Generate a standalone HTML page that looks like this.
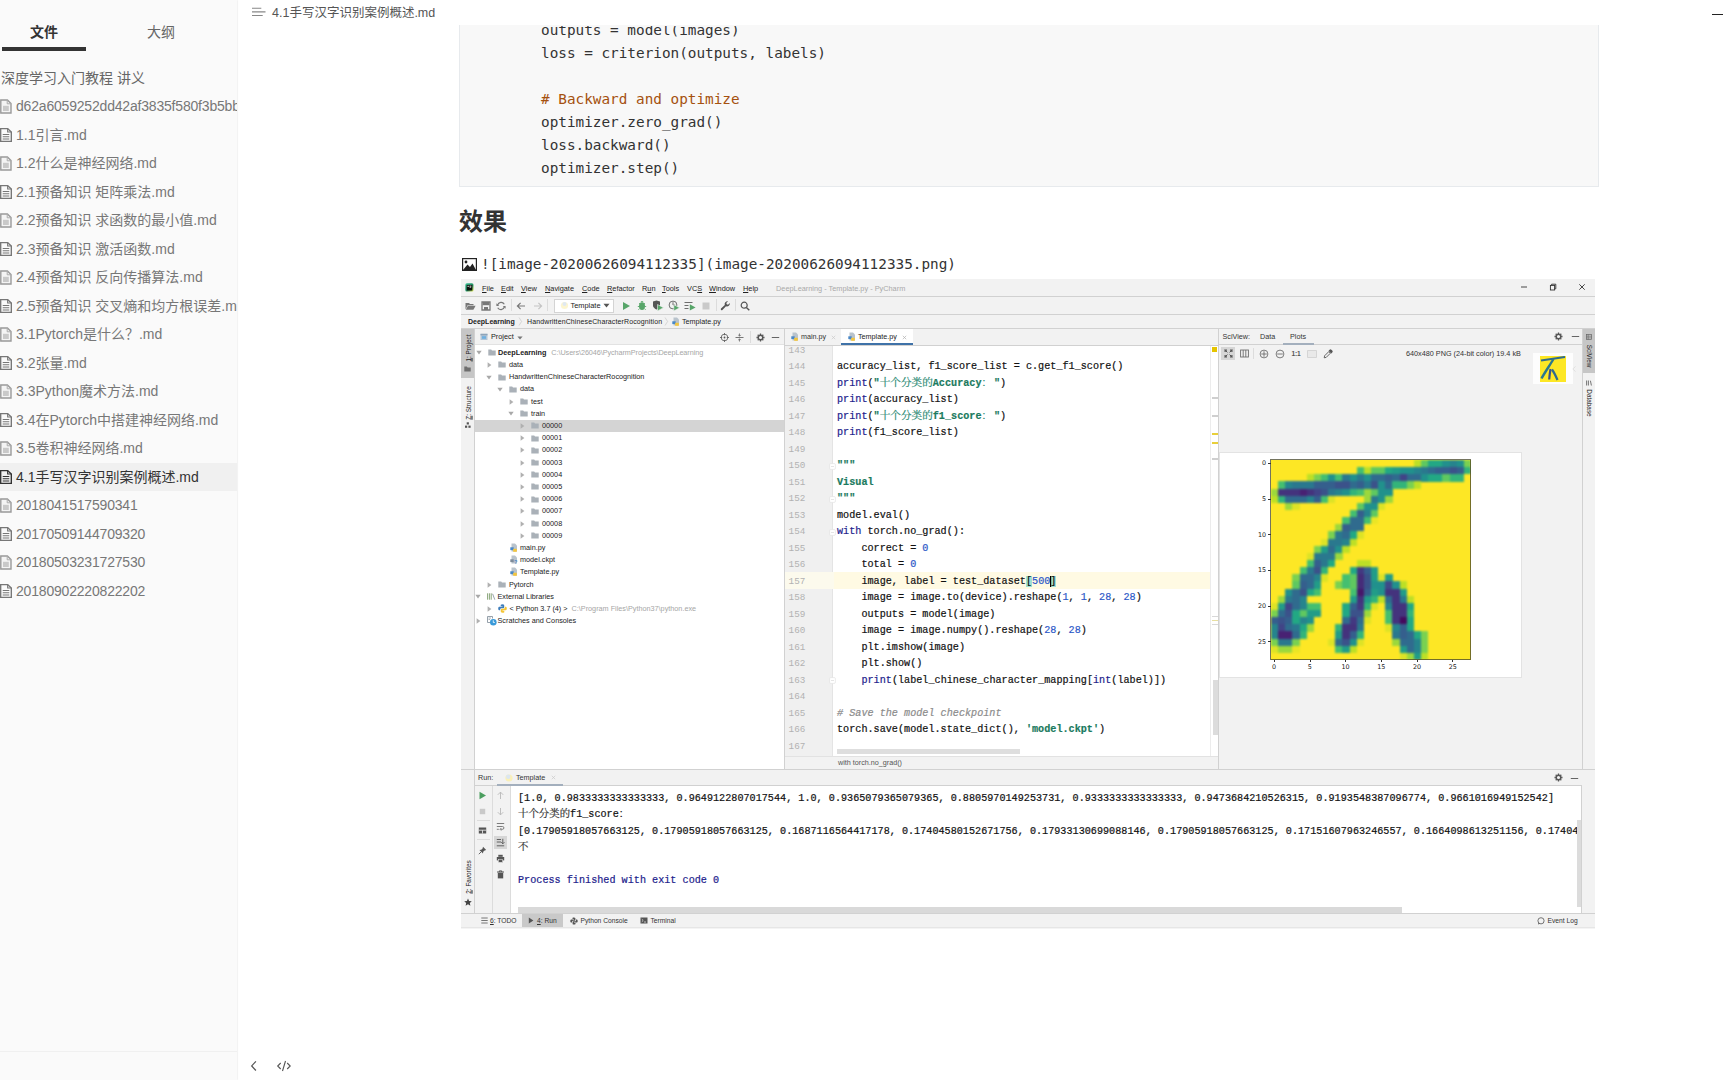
<!DOCTYPE html><html lang="zh"><head><meta charset="utf-8"><title>4.1手写汉字识别案例概述.md</title><style>
*{box-sizing:border-box;margin:0;padding:0}
html,body{width:1728px;height:1080px;overflow:hidden;background:#fff}
body{position:relative;font-family:"Liberation Sans","Noto Sans CJK SC",sans-serif;color:#333}
.a{position:absolute;white-space:nowrap}
.mono{font-family:"Liberation Mono","Noto Sans CJK SC",monospace}
#side{left:0;top:0;width:237px;height:1080px;background:#fafafa;box-shadow:0.5px 0 1.5px rgba(0,0,0,0.13);overflow:hidden}
.fi{left:0;width:237px;height:28px;font-size:14px;line-height:28px;color:#777;overflow:hidden}
.fi span{position:absolute;left:16px;top:0}
.fi svg{position:absolute;left:0px;top:7px}
.fi.act{background:#f0f0f0;color:#333}
.code{font-family:'DejaVu Sans Mono','Liberation Mono',monospace;font-size:14.35px;line-height:23px;color:#333;white-space:pre}
/* pycharm */
.ui{font-size:7.35px;line-height:10px;color:#222}
.pc{font-size:10.14px;line-height:16.5px;color:#111;white-space:pre;letter-spacing:0.018px;-webkit-text-stroke:0.2px}
.ln{font-size:9.3px;line-height:16.5px;color:#b2b2b2;white-space:pre}
.tr{font-size:7.25px;line-height:12px;color:#222}
.kw{color:#1c1c8c}.st{color:#1a7a5e;font-weight:bold}.nu{color:#2a57c8}.cm{color:#8c8c8c;font-style:italic}.bi{color:#1c1c8c}
</style></head><body>
<div id="side" class="a">
<div class="a" style="left:30px;top:21px;font-size:14px;line-height:22px;font-weight:bold;color:#333">文件</div>
<div class="a" style="left:147px;top:21px;font-size:14px;line-height:22px;color:#666">大纲</div>
<div class="a" style="left:2px;top:47.3px;width:84px;height:3.3px;background:#333"></div>
<div class="a" style="left:1px;top:67px;font-size:14px;line-height:22px;color:#666">深度学习入门教程 讲义</div>
<div class="a fi" style="top:92.0px"><svg width="12" height="15" viewBox="0 0 12 15" style="top:6.5px"><path d="M0.8 1H7.4L11 4.6V14H0.8Z" fill="#f4f4f4" stroke="#999" stroke-width="1.4"/><path d="M7.2 1V4.8H11" fill="none" stroke="#aaa" stroke-width="1"/><rect x="3" y="6.8" width="5.8" height="5.2" fill="#c9c9c9"/></svg><span style="letter-spacing:-0.19px">d62a6059252dd42af3835f580f3b5bb8</span></div>
<div class="a fi" style="top:120.5px"><svg width="12" height="14" viewBox="0 0 11 14" preserveAspectRatio="none"><path d="M0.6 0.6H7L10.4 4V13.4H0.6Z" fill="none" stroke="#777" stroke-width="1.3"/><path d="M7 0.6V4H10.4" fill="none" stroke="#777" stroke-width="1"/><path d="M2.5 6.5H8.5M2.5 8.7H8.5M2.5 10.9H8.5" stroke="#777" stroke-width="1"/></svg><span>1.1引言.md</span></div>
<div class="a fi" style="top:149.0px"><svg width="12" height="15" viewBox="0 0 12 15" style="top:6.5px"><path d="M0.8 1H7.4L11 4.6V14H0.8Z" fill="#f4f4f4" stroke="#999" stroke-width="1.4"/><path d="M7.2 1V4.8H11" fill="none" stroke="#aaa" stroke-width="1"/><rect x="3" y="6.8" width="5.8" height="5.2" fill="#c9c9c9"/></svg><span>1.2什么是神经网络.md</span></div>
<div class="a fi" style="top:177.5px"><svg width="12" height="14" viewBox="0 0 11 14" preserveAspectRatio="none"><path d="M0.6 0.6H7L10.4 4V13.4H0.6Z" fill="none" stroke="#777" stroke-width="1.3"/><path d="M7 0.6V4H10.4" fill="none" stroke="#777" stroke-width="1"/><path d="M2.5 6.5H8.5M2.5 8.7H8.5M2.5 10.9H8.5" stroke="#777" stroke-width="1"/></svg><span>2.1预备知识 矩阵乘法.md</span></div>
<div class="a fi" style="top:206.0px"><svg width="12" height="15" viewBox="0 0 12 15" style="top:6.5px"><path d="M0.8 1H7.4L11 4.6V14H0.8Z" fill="#f4f4f4" stroke="#999" stroke-width="1.4"/><path d="M7.2 1V4.8H11" fill="none" stroke="#aaa" stroke-width="1"/><rect x="3" y="6.8" width="5.8" height="5.2" fill="#c9c9c9"/></svg><span>2.2预备知识 求函数的最小值.md</span></div>
<div class="a fi" style="top:234.5px"><svg width="12" height="14" viewBox="0 0 11 14" preserveAspectRatio="none"><path d="M0.6 0.6H7L10.4 4V13.4H0.6Z" fill="none" stroke="#777" stroke-width="1.3"/><path d="M7 0.6V4H10.4" fill="none" stroke="#777" stroke-width="1"/><path d="M2.5 6.5H8.5M2.5 8.7H8.5M2.5 10.9H8.5" stroke="#777" stroke-width="1"/></svg><span>2.3预备知识 激活函数.md</span></div>
<div class="a fi" style="top:263.0px"><svg width="12" height="15" viewBox="0 0 12 15" style="top:6.5px"><path d="M0.8 1H7.4L11 4.6V14H0.8Z" fill="#f4f4f4" stroke="#999" stroke-width="1.4"/><path d="M7.2 1V4.8H11" fill="none" stroke="#aaa" stroke-width="1"/><rect x="3" y="6.8" width="5.8" height="5.2" fill="#c9c9c9"/></svg><span>2.4预备知识 反向传播算法.md</span></div>
<div class="a fi" style="top:291.5px"><svg width="12" height="14" viewBox="0 0 11 14" preserveAspectRatio="none"><path d="M0.6 0.6H7L10.4 4V13.4H0.6Z" fill="none" stroke="#777" stroke-width="1.3"/><path d="M7 0.6V4H10.4" fill="none" stroke="#777" stroke-width="1"/><path d="M2.5 6.5H8.5M2.5 8.7H8.5M2.5 10.9H8.5" stroke="#777" stroke-width="1"/></svg><span>2.5预备知识 交叉熵和均方根误差.md</span></div>
<div class="a fi" style="top:320.0px"><svg width="12" height="15" viewBox="0 0 12 15" style="top:6.5px"><path d="M0.8 1H7.4L11 4.6V14H0.8Z" fill="#f4f4f4" stroke="#999" stroke-width="1.4"/><path d="M7.2 1V4.8H11" fill="none" stroke="#aaa" stroke-width="1"/><rect x="3" y="6.8" width="5.8" height="5.2" fill="#c9c9c9"/></svg><span>3.1Pytorch是什么？.md</span></div>
<div class="a fi" style="top:348.5px"><svg width="12" height="14" viewBox="0 0 11 14" preserveAspectRatio="none"><path d="M0.6 0.6H7L10.4 4V13.4H0.6Z" fill="none" stroke="#777" stroke-width="1.3"/><path d="M7 0.6V4H10.4" fill="none" stroke="#777" stroke-width="1"/><path d="M2.5 6.5H8.5M2.5 8.7H8.5M2.5 10.9H8.5" stroke="#777" stroke-width="1"/></svg><span>3.2张量.md</span></div>
<div class="a fi" style="top:377.0px"><svg width="12" height="15" viewBox="0 0 12 15" style="top:6.5px"><path d="M0.8 1H7.4L11 4.6V14H0.8Z" fill="#f4f4f4" stroke="#999" stroke-width="1.4"/><path d="M7.2 1V4.8H11" fill="none" stroke="#aaa" stroke-width="1"/><rect x="3" y="6.8" width="5.8" height="5.2" fill="#c9c9c9"/></svg><span>3.3Python魔术方法.md</span></div>
<div class="a fi" style="top:405.5px"><svg width="12" height="14" viewBox="0 0 11 14" preserveAspectRatio="none"><path d="M0.6 0.6H7L10.4 4V13.4H0.6Z" fill="none" stroke="#777" stroke-width="1.3"/><path d="M7 0.6V4H10.4" fill="none" stroke="#777" stroke-width="1"/><path d="M2.5 6.5H8.5M2.5 8.7H8.5M2.5 10.9H8.5" stroke="#777" stroke-width="1"/></svg><span>3.4在Pytorch中搭建神经网络.md</span></div>
<div class="a fi" style="top:434.0px"><svg width="12" height="15" viewBox="0 0 12 15" style="top:6.5px"><path d="M0.8 1H7.4L11 4.6V14H0.8Z" fill="#f4f4f4" stroke="#999" stroke-width="1.4"/><path d="M7.2 1V4.8H11" fill="none" stroke="#aaa" stroke-width="1"/><rect x="3" y="6.8" width="5.8" height="5.2" fill="#c9c9c9"/></svg><span>3.5卷积神经网络.md</span></div>
<div class="a fi act" style="top:462.5px"><svg width="12" height="14" viewBox="0 0 11 14" preserveAspectRatio="none"><path d="M0.6 0.6H7L10.4 4V13.4H0.6Z" fill="none" stroke="#333" stroke-width="1.3"/><path d="M7 0.6V4H10.4" fill="none" stroke="#333" stroke-width="1"/><path d="M2.5 6.5H8.5M2.5 8.7H8.5M2.5 10.9H8.5" stroke="#333" stroke-width="1"/></svg><span>4.1手写汉字识别案例概述.md</span></div>
<div class="a fi" style="top:491.0px"><svg width="12" height="15" viewBox="0 0 12 15" style="top:6.5px"><path d="M0.8 1H7.4L11 4.6V14H0.8Z" fill="#f4f4f4" stroke="#999" stroke-width="1.4"/><path d="M7.2 1V4.8H11" fill="none" stroke="#aaa" stroke-width="1"/><rect x="3" y="6.8" width="5.8" height="5.2" fill="#c9c9c9"/></svg><span style="letter-spacing:-0.19px">2018041517590341</span></div>
<div class="a fi" style="top:519.5px"><svg width="12" height="14" viewBox="0 0 11 14" preserveAspectRatio="none"><path d="M0.6 0.6H7L10.4 4V13.4H0.6Z" fill="none" stroke="#777" stroke-width="1.3"/><path d="M7 0.6V4H10.4" fill="none" stroke="#777" stroke-width="1"/><path d="M2.5 6.5H8.5M2.5 8.7H8.5M2.5 10.9H8.5" stroke="#777" stroke-width="1"/></svg><span style="letter-spacing:-0.19px">20170509144709320</span></div>
<div class="a fi" style="top:548.0px"><svg width="12" height="15" viewBox="0 0 12 15" style="top:6.5px"><path d="M0.8 1H7.4L11 4.6V14H0.8Z" fill="#f4f4f4" stroke="#999" stroke-width="1.4"/><path d="M7.2 1V4.8H11" fill="none" stroke="#aaa" stroke-width="1"/><rect x="3" y="6.8" width="5.8" height="5.2" fill="#c9c9c9"/></svg><span style="letter-spacing:-0.19px">20180503231727530</span></div>
<div class="a fi" style="top:576.5px"><svg width="12" height="14" viewBox="0 0 11 14" preserveAspectRatio="none"><path d="M0.6 0.6H7L10.4 4V13.4H0.6Z" fill="none" stroke="#777" stroke-width="1.3"/><path d="M7 0.6V4H10.4" fill="none" stroke="#777" stroke-width="1"/><path d="M2.5 6.5H8.5M2.5 8.7H8.5M2.5 10.9H8.5" stroke="#777" stroke-width="1"/></svg><span style="letter-spacing:-0.19px">20180902220822202</span></div>
<div class="a" style="left:0;top:1051px;width:238px;height:1px;background:#f0f0f0"></div>
</div>
<svg class="a" style="left:251.5px;top:7px" width="15" height="11" viewBox="0 0 15 11"><path d="M0 1.3H9.3M0 4.9H13.5M0 8.5H10.7" stroke="#888" stroke-width="1.1"/></svg>
<div class="a" style="left:272px;top:4px;font-size:12.5px;line-height:18px;color:#555">4.1手写汉字识别案例概述.md</div>
<div class="a" style="left:1712px;top:14px;width:11px;height:1px;background:#222"></div>
<div class="a" style="left:459px;top:25px;width:1140px;height:162px;background:#f8f8f8;border:1px solid #e7eaed;border-top:none;overflow:hidden"></div>
<div class="a" style="left:459px;top:26px;width:1140px;height:161px;overflow:hidden">
<div class="a mono code" style="left:82px;top:-7.5px">outputs = model(images)</div>
<div class="a mono code" style="left:82px;top:15.5px">loss = criterion(outputs, labels)</div>
<div class="a mono code" style="left:82px;top:61.5px"><span style="color:#a5510f"># Backward and optimize</span></div>
<div class="a mono code" style="left:82px;top:84.5px">optimizer.zero_grad()</div>
<div class="a mono code" style="left:82px;top:107.5px">loss.backward()</div>
<div class="a mono code" style="left:82px;top:130.5px">optimizer.step()</div>
</div>
<div class="a" style="left:459px;top:204px;font-size:24px;line-height:36px;font-weight:bold;color:#333">效果</div>
<svg class="a" style="left:462px;top:258px" width="15" height="13" viewBox="0 0 15 13"><rect x="0.6" y="0.6" width="13.8" height="11.8" fill="#fff" stroke="#222" stroke-width="1.2"/><circle cx="4" cy="4" r="1.4" fill="#222"/><path d="M1 12L5.5 6.5L8 9L10.5 5.5L14 12Z" fill="#222"/></svg>
<div class="a mono code" style="left:481px;top:252.5px;line-height:22px">![image-20200626094112335](image-20200626094112335.png)</div>
<svg class="a" style="left:249px;top:1059px" width="10" height="14" viewBox="0 0 10 14"><path d="M6.9 2.3L2.7 6.9L6.9 11.5" fill="none" stroke="#555" stroke-width="1.25"/></svg>
<svg class="a" style="left:276px;top:1059px" width="17" height="14" viewBox="0 0 17 14"><path d="M4.7 4L1.7 7L4.7 10M11.2 4L14.2 7L11.2 10M9.5 2L6.5 12" fill="none" stroke="#555" stroke-width="1.1"/></svg>
<div class="a" style="left:461px;top:279px;width:1134px;height:648px;background:#f2f2f2;"></div>
<div class="a" style="left:461px;top:296px;width:1134px;height:1px;background:#d1d1d1;"></div>
<svg class="a" style="left:465px;top:283px" width="9" height="9" viewBox="0 0 9 9"><defs><linearGradient id="pcg" x1="0" y1="0" x2="1" y2="1"><stop offset="0" stop-color="#3fc59a"/><stop offset="0.55" stop-color="#1e8f62"/><stop offset="1" stop-color="#e8e84a"/></linearGradient></defs><rect x="0.3" y="0.3" width="8.2" height="8.2" rx="1.6" fill="url(#pcg)"/><rect x="1.7" y="1.9" width="5.6" height="5.6" fill="#0a0f0a"/><path d="M2.4 3.3H4M4.6 3.1L6.4 3.1M4.6 4.2H6.2" stroke="#fff" stroke-width="0.8"/></svg>
<div class="a ui" style="left:482px;top:283.5px;"><u>F</u>ile</div>
<div class="a ui" style="left:501px;top:283.5px;"><u>E</u>dit</div>
<div class="a ui" style="left:521px;top:283.5px;"><u>V</u>iew</div>
<div class="a ui" style="left:545px;top:283.5px;"><u>N</u>avigate</div>
<div class="a ui" style="left:582px;top:283.5px;"><u>C</u>ode</div>
<div class="a ui" style="left:607px;top:283.5px;"><u>R</u>efactor</div>
<div class="a ui" style="left:642px;top:283.5px;">R<u>u</u>n</div>
<div class="a ui" style="left:662px;top:283.5px;"><u>T</u>ools</div>
<div class="a ui" style="left:687px;top:283.5px;">VC<u>S</u></div>
<div class="a ui" style="left:709px;top:283.5px;"><u>W</u>indow</div>
<div class="a ui" style="left:743px;top:283.5px;"><u>H</u>elp</div>
<div class="a ui" style="left:776px;top:283.5px;color:#a9a9a9">DeepLearning - Template.py - PyCharm</div>
<svg class="a" style="left:1520.2px;top:283.4px" width="8" height="8" viewBox="0 0 8 8"><path d="M1 4H7" stroke="#333" stroke-width="0.9"/></svg>
<svg class="a" style="left:1548.8px;top:283.4px" width="8" height="8" viewBox="0 0 8 8"><rect x="1.4" y="2.4" width="4.2" height="4.6" fill="none" stroke="#333" stroke-width="0.9"/><path d="M2.6 2.4V1.2H6.8V5.8H5.6" fill="none" stroke="#333" stroke-width="0.9"/></svg>
<svg class="a" style="left:1577.7px;top:283.4px" width="8" height="8" viewBox="0 0 8 8"><path d="M1.3 1.3L6.7 6.7M6.7 1.3L1.3 6.7" stroke="#333" stroke-width="0.9"/></svg>
<div class="a" style="left:461px;top:314px;width:1134px;height:1px;background:#d1d1d1;"></div>
<svg class="a" style="left:465px;top:300.5px" width="11" height="10" viewBox="0 0 11 10"><path d="M0.5 2H4L5 3H8.5V4.2H2.6L0.5 8.5Z" fill="#787878"/><path d="M2.9 4.7H10.6L8.4 8.8H0.8Z" fill="#787878"/></svg>
<svg class="a" style="left:481px;top:300.5px" width="10" height="10" viewBox="0 0 10 10"><path d="M1 1H9V9H1Z" fill="none" stroke="#787878" stroke-width="1.3"/><rect x="1.5" y="1" width="7" height="3.2" fill="#787878"/><rect x="3" y="6" width="4" height="3" fill="#787878"/></svg>
<svg class="a" style="left:496px;top:300.5px" width="10" height="10" viewBox="0 0 10 10"><path d="M8.3 3.2A3.7 3.7 0 0 0 1.6 4" fill="none" stroke="#787878" stroke-width="1.2"/><path d="M1.7 6.8A3.7 3.7 0 0 0 8.4 6" fill="none" stroke="#787878" stroke-width="1.2"/><path d="M0.4 2.2V5H3.2ZM9.6 7.8V5H6.8Z" fill="#787878"/></svg>
<div class="a" style="left:511px;top:299px;width:1px;height:12px;background:#dcdcdc;"></div>
<svg class="a" style="left:516px;top:300.5px" width="10" height="10" viewBox="0 0 10 10"><path d="M9 5H1.5M4.6 1.8L1.4 5L4.6 8.2" fill="none" stroke="#787878" stroke-width="1.2"/></svg>
<svg class="a" style="left:533px;top:300.5px" width="10" height="10" viewBox="0 0 10 10"><path d="M1 5H8.5M5.4 1.8L8.6 5L5.4 8.2" fill="none" stroke="#c4c4c4" stroke-width="1.2"/></svg>
<div class="a" style="left:547px;top:299px;width:1px;height:12px;background:#dcdcdc;"></div>
<div class="a" style="left:554px;top:298.5px;width:60px;height:14px;background:#fff;border:1px solid #d4d4d4"></div>
<svg class="a" style="left:560px;top:301px" width="9" height="9" viewBox="0 0 9 9"><circle cx="4.5" cy="4.5" r="3.6" fill="#fbf3c4" opacity=".8"/><circle cx="4.5" cy="3" r="2" fill="#dfe8f2"/></svg>
<div class="a ui" style="left:570.5px;top:300.5px;font-size:7.4px">Template</div>
<svg class="a" style="left:603px;top:303px" width="7" height="5" viewBox="0 0 7 5"><path d="M0.5 0.8H6.5L3.5 4.4Z" fill="#555"/></svg>
<svg class="a" style="left:621px;top:300.5px" width="10" height="10" viewBox="0 0 10 10"><path d="M2 1L9 5L2 9Z" fill="#57a569"/></svg>
<svg class="a" style="left:637px;top:300px" width="10" height="11" viewBox="0 0 10 11"><ellipse cx="5" cy="6.3" rx="3" ry="3.7" fill="#57a569"/><path d="M2 3.2L3.6 4.6M8 3.2L6.4 4.6M0.8 6.5H2M8 6.5H9.2M1.4 9.8L2.6 8.6M8.6 9.8L7.4 8.6" stroke="#57a569" stroke-width="0.9"/><path d="M3.5 2.6A1.5 1.5 0 0 1 6.5 2.6Z" fill="#57a569"/></svg>
<svg class="a" style="left:652px;top:300px" width="12" height="11" viewBox="0 0 12 11"><path d="M1 1.5L4.5 0.5L8 1.5V5.5C8 8 4.5 9.5 4.5 9.5C4.5 9.5 1 8 1 5.5Z" fill="#555"/><path d="M5.5 4.5L11.5 7.7L5.5 10.9Z" fill="#57a569" stroke="#f2f2f2" stroke-width="0.6"/></svg>
<svg class="a" style="left:668px;top:300px" width="12" height="11" viewBox="0 0 12 11"><circle cx="5" cy="5" r="3.9" fill="none" stroke="#6e6e6e" stroke-width="1"/><path d="M5 2.2V5H7.2" fill="none" stroke="#6e6e6e" stroke-width="1"/><path d="M5.8 4.7L11.6 7.8L5.8 10.9Z" fill="#57a569" stroke="#f2f2f2" stroke-width="0.6"/></svg>
<svg class="a" style="left:684px;top:300.5px" width="12" height="10" viewBox="0 0 12 10"><path d="M0.5 1.5H8.5M0.5 4.5H4.5M0.5 7.5H4.5" stroke="#6e6e6e" stroke-width="1.2"/><path d="M5.8 3.2L11.6 6.4L5.8 9.6Z" fill="#57a569"/></svg>
<svg class="a" style="left:701px;top:300.5px" width="10" height="10" viewBox="0 0 10 10"><rect x="1.5" y="1.5" width="7" height="7" fill="#c9c9c9"/></svg>
<div class="a" style="left:716px;top:299px;width:1px;height:12px;background:#dcdcdc;"></div>
<svg class="a" style="left:720px;top:300px" width="11" height="11" viewBox="0 0 11 11"><path d="M9.8 2.9A2.9 2.9 0 0 1 6 6.2L2.4 10A1 1 0 0 1 1 8.6L4.8 5A2.9 2.9 0 0 1 8.1 1.2L6.3 3L6.8 4.2L8 4.7Z" fill="#555"/></svg>
<div class="a" style="left:735px;top:299px;width:1px;height:12px;background:#dcdcdc;"></div>
<svg class="a" style="left:740px;top:300.5px" width="10" height="10" viewBox="0 0 10 10"><circle cx="4.2" cy="4.2" r="3" fill="none" stroke="#555" stroke-width="1.2"/><path d="M6.4 6.4L9.3 9.3" stroke="#555" stroke-width="1.4"/></svg>
<div class="a ui" style="left:468px;top:316.5px;font-weight:bold;font-size:7px;letter-spacing:0">DeepLearning</div>
<svg class="a" style="left:518px;top:317px" width="5" height="9" viewBox="0 0 5 9"><path d="M1 0.5L3.6 4.5L1 8.5" fill="none" stroke="#c8c8c8" stroke-width="0.7"/></svg>
<div class="a ui" style="left:527px;top:316.5px;font-size:7px;letter-spacing:0.12px">HandwrittenChineseCharacterRocognition</div>
<svg class="a" style="left:664px;top:317px" width="5" height="9" viewBox="0 0 5 9"><path d="M1 0.5L3.6 4.5L1 8.5" fill="none" stroke="#c8c8c8" stroke-width="0.7"/></svg>
<svg class="a" style="left:672px;top:316.5px" width="8" height="10" viewBox="0 0 8 10"><path d="M1.5 0.5H5L7 2.5V8.5H1.5Z" fill="#b9c3cc"/><rect x="0.3" y="4.3" width="3.4" height="2.8" fill="#4a88c7"/><rect x="3.2" y="5.8" width="3.6" height="3" fill="#f4c63d"/></svg>
<div class="a ui" style="left:682px;top:316.5px;font-size:7.2px">Template.py</div>
<div class="a" style="left:461px;top:328px;width:1134px;height:1px;background:#d1d1d1;"></div>
<div class="a" style="left:474px;top:329px;width:1px;height:585px;background:#d1d1d1;"></div>
<div class="a" style="left:461px;top:329px;width:13px;height:49px;background:#c6c6c6;"></div>
<div class="a ui" style="left:467.5px;top:348px;width:0;height:0;"><div style="position:absolute;white-space:nowrap;transform:translate(-50%,-50%) rotate(-90deg);font-size:6.4px;line-height:9px"><u>1</u>: Project</div></div>
<svg class="a" style="left:464px;top:366px" width="7" height="6" viewBox="0 0 7 6"><path d="M0.3 0.5H2.8L3.6 1.4H6.7V5.6H0.3Z" fill="#6e6e6e"/></svg>
<div class="a ui" style="left:467.5px;top:403px;width:0;height:0;"><div style="position:absolute;white-space:nowrap;transform:translate(-50%,-50%) rotate(-90deg);font-size:6.4px;line-height:9px"><u>Z</u>: Structure</div></div>
<svg class="a" style="left:464.5px;top:422px" width="6" height="6" viewBox="0 0 6 6"><rect x="0" y="3.6" width="2.2" height="2.2" fill="#555"/><rect x="3.4" y="3.6" width="2.2" height="2.2" fill="#555"/><rect x="1.7" y="0.3" width="2.2" height="2.2" fill="#555"/></svg>
<div class="a ui" style="left:467.5px;top:877px;width:0;height:0;"><div style="position:absolute;white-space:nowrap;transform:translate(-50%,-50%) rotate(-90deg);font-size:6.4px;line-height:9px"><u>2</u>: Favorites</div></div>
<svg class="a" style="left:463.5px;top:898px" width="8" height="8" viewBox="0 0 8 8"><path d="M4 0.4L5.1 2.9L7.8 3.2L5.8 5L6.4 7.7L4 6.3L1.6 7.7L2.2 5L0.2 3.2L2.9 2.9Z" fill="#444"/></svg>
<div class="a" style="left:475px;top:329px;width:309px;height:16px;background:#f2f2f2;"></div>
<div class="a" style="left:475px;top:344px;width:309px;height:1px;background:#e2e2e2;"></div>
<div class="a" style="left:475px;top:345px;width:309px;height:424px;background:#fff;"></div>
<div class="a" style="left:784px;top:329px;width:1px;height:440px;background:#d1d1d1;"></div>
<svg class="a" style="left:480px;top:332.5px" width="8" height="8" viewBox="0 0 8 8"><rect x="0.5" y="0.8" width="7" height="6.2" fill="#b4c6d6"/><rect x="0.5" y="0.8" width="7" height="1.5" fill="#8fa4b8"/><rect x="2" y="3.2" width="4" height="2.6" fill="#6fb0e0"/></svg>
<div class="a ui" style="left:491px;top:332px;font-size:7.3px">Project</div>
<svg class="a" style="left:517px;top:335.5px" width="6" height="4" viewBox="0 0 6 4"><path d="M0.4 0.5H5.6L3 3.6Z" fill="#777"/></svg>
<svg class="a" style="left:720px;top:333px" width="9" height="9" viewBox="0 0 9 9"><circle cx="4.5" cy="4.5" r="3.3" fill="none" stroke="#555" stroke-width="0.8"/><circle cx="4.5" cy="4.5" r="0.9" fill="#555"/><path d="M4.5 0V2.2M4.5 6.8V9M0 4.5H2.2M6.8 4.5H9" stroke="#555" stroke-width="0.8"/></svg>
<svg class="a" style="left:735px;top:333px" width="9" height="9" viewBox="0 0 9 9"><path d="M0.5 4.5H8.5" stroke="#555" stroke-width="0.8"/><path d="M4.5 0.5V3M3.2 1.9L4.5 3.2L5.8 1.9M4.5 8.5V6M3.2 7.1L4.5 5.8L5.8 7.1" fill="none" stroke="#555" stroke-width="0.7"/></svg>
<div class="a" style="left:750px;top:331px;width:1px;height:12px;background:#dcdcdc;"></div>
<svg class="a" style="left:755.5px;top:332.5px" width="9" height="9" viewBox="0 0 9 9"><g transform="translate(4.5 4.5)"><circle r="2.3" fill="none" stroke="#555" stroke-width="1.5"/><g stroke="#555" stroke-width="1.3"><path d="M0 -4V-2.6M0 4V2.6M-4 0H-2.6M4 0H2.6M-2.83 -2.83L-1.9 -1.9M2.83 2.83L1.9 1.9M-2.83 2.83L-1.9 1.9M2.83 -2.83L1.9 -1.9"/></g></g></svg>
<svg class="a" style="left:771px;top:333px" width="9" height="9" viewBox="0 0 9 9"><path d="M0.8 4.5H8.2" stroke="#555" stroke-width="0.9"/></svg>
<svg class="a" style="left:476px;top:350.3px" width="6" height="5" viewBox="0 0 6 5"><path d="M0.3 0.8H5.7L3 4.4Z" fill="#a8a8a8"/></svg>
<svg class="a" style="left:487.5px;top:349.3px" width="8" height="7" viewBox="0 0 8 7"><path d="M0.3 0.6H3.2L4 1.6H7.7V6.4H0.3Z" fill="#aab1b8"/></svg>
<div class="a tr" style="left:498px;top:346.8px;"><b>DeepLearning</b> <span style="color:#a6a6a6;margin-left:3px;letter-spacing:-0.07px">C:\Users\26046\PycharmProjects\DeepLearning</span></div>
<svg class="a" style="left:487px;top:361.995px" width="5" height="6" viewBox="0 0 5 6"><path d="M0.6 0.3L4.4 3L0.6 5.7Z" fill="#b0b0b0"/></svg>
<svg class="a" style="left:498px;top:361.495px" width="8" height="7" viewBox="0 0 8 7"><path d="M0.3 0.6H3.2L4 1.6H7.7V6.4H0.3Z" fill="#aab1b8"/></svg>
<div class="a tr" style="left:509px;top:358.995px;">data</div>
<svg class="a" style="left:486px;top:374.69px" width="6" height="5" viewBox="0 0 6 5"><path d="M0.3 0.8H5.7L3 4.4Z" fill="#a8a8a8"/></svg>
<svg class="a" style="left:498px;top:373.69px" width="8" height="7" viewBox="0 0 8 7"><path d="M0.3 0.6H3.2L4 1.6H7.7V6.4H0.3Z" fill="#aab1b8"/></svg>
<div class="a tr" style="left:509px;top:371.19px;">HandwrittenChineseCharacterRocognition</div>
<svg class="a" style="left:497px;top:386.885px" width="6" height="5" viewBox="0 0 6 5"><path d="M0.3 0.8H5.7L3 4.4Z" fill="#a8a8a8"/></svg>
<svg class="a" style="left:509px;top:385.885px" width="8" height="7" viewBox="0 0 8 7"><path d="M0.3 0.6H3.2L4 1.6H7.7V6.4H0.3Z" fill="#aab1b8"/></svg>
<div class="a tr" style="left:520px;top:383.385px;">data</div>
<svg class="a" style="left:509px;top:398.58px" width="5" height="6" viewBox="0 0 5 6"><path d="M0.6 0.3L4.4 3L0.6 5.7Z" fill="#b0b0b0"/></svg>
<svg class="a" style="left:520px;top:398.08px" width="8" height="7" viewBox="0 0 8 7"><path d="M0.3 0.6H3.2L4 1.6H7.7V6.4H0.3Z" fill="#aab1b8"/></svg>
<div class="a tr" style="left:531px;top:395.58px;">test</div>
<svg class="a" style="left:508px;top:411.275px" width="6" height="5" viewBox="0 0 6 5"><path d="M0.3 0.8H5.7L3 4.4Z" fill="#a8a8a8"/></svg>
<svg class="a" style="left:520px;top:410.275px" width="8" height="7" viewBox="0 0 8 7"><path d="M0.3 0.6H3.2L4 1.6H7.7V6.4H0.3Z" fill="#aab1b8"/></svg>
<div class="a tr" style="left:531px;top:407.775px;">train</div>
<div class="a" style="left:475px;top:419.97px;width:309px;height:12.2px;background:#d4d4d4;"></div>
<svg class="a" style="left:520px;top:422.97px" width="5" height="6" viewBox="0 0 5 6"><path d="M0.6 0.3L4.4 3L0.6 5.7Z" fill="#b0b0b0"/></svg>
<svg class="a" style="left:531px;top:422.47px" width="8" height="7" viewBox="0 0 8 7"><path d="M0.3 0.6H3.2L4 1.6H7.7V6.4H0.3Z" fill="#aab1b8"/></svg>
<div class="a tr" style="left:542px;top:419.97px;">00000</div>
<svg class="a" style="left:520px;top:435.165px" width="5" height="6" viewBox="0 0 5 6"><path d="M0.6 0.3L4.4 3L0.6 5.7Z" fill="#b0b0b0"/></svg>
<svg class="a" style="left:531px;top:434.665px" width="8" height="7" viewBox="0 0 8 7"><path d="M0.3 0.6H3.2L4 1.6H7.7V6.4H0.3Z" fill="#aab1b8"/></svg>
<div class="a tr" style="left:542px;top:432.165px;">00001</div>
<svg class="a" style="left:520px;top:447.36px" width="5" height="6" viewBox="0 0 5 6"><path d="M0.6 0.3L4.4 3L0.6 5.7Z" fill="#b0b0b0"/></svg>
<svg class="a" style="left:531px;top:446.86px" width="8" height="7" viewBox="0 0 8 7"><path d="M0.3 0.6H3.2L4 1.6H7.7V6.4H0.3Z" fill="#aab1b8"/></svg>
<div class="a tr" style="left:542px;top:444.36px;">00002</div>
<svg class="a" style="left:520px;top:459.555px" width="5" height="6" viewBox="0 0 5 6"><path d="M0.6 0.3L4.4 3L0.6 5.7Z" fill="#b0b0b0"/></svg>
<svg class="a" style="left:531px;top:459.055px" width="8" height="7" viewBox="0 0 8 7"><path d="M0.3 0.6H3.2L4 1.6H7.7V6.4H0.3Z" fill="#aab1b8"/></svg>
<div class="a tr" style="left:542px;top:456.555px;">00003</div>
<svg class="a" style="left:520px;top:471.75px" width="5" height="6" viewBox="0 0 5 6"><path d="M0.6 0.3L4.4 3L0.6 5.7Z" fill="#b0b0b0"/></svg>
<svg class="a" style="left:531px;top:471.25px" width="8" height="7" viewBox="0 0 8 7"><path d="M0.3 0.6H3.2L4 1.6H7.7V6.4H0.3Z" fill="#aab1b8"/></svg>
<div class="a tr" style="left:542px;top:468.75px;">00004</div>
<svg class="a" style="left:520px;top:483.945px" width="5" height="6" viewBox="0 0 5 6"><path d="M0.6 0.3L4.4 3L0.6 5.7Z" fill="#b0b0b0"/></svg>
<svg class="a" style="left:531px;top:483.445px" width="8" height="7" viewBox="0 0 8 7"><path d="M0.3 0.6H3.2L4 1.6H7.7V6.4H0.3Z" fill="#aab1b8"/></svg>
<div class="a tr" style="left:542px;top:480.945px;">00005</div>
<svg class="a" style="left:520px;top:496.14px" width="5" height="6" viewBox="0 0 5 6"><path d="M0.6 0.3L4.4 3L0.6 5.7Z" fill="#b0b0b0"/></svg>
<svg class="a" style="left:531px;top:495.64px" width="8" height="7" viewBox="0 0 8 7"><path d="M0.3 0.6H3.2L4 1.6H7.7V6.4H0.3Z" fill="#aab1b8"/></svg>
<div class="a tr" style="left:542px;top:493.14px;">00006</div>
<svg class="a" style="left:520px;top:508.335px" width="5" height="6" viewBox="0 0 5 6"><path d="M0.6 0.3L4.4 3L0.6 5.7Z" fill="#b0b0b0"/></svg>
<svg class="a" style="left:531px;top:507.835px" width="8" height="7" viewBox="0 0 8 7"><path d="M0.3 0.6H3.2L4 1.6H7.7V6.4H0.3Z" fill="#aab1b8"/></svg>
<div class="a tr" style="left:542px;top:505.335px;">00007</div>
<svg class="a" style="left:520px;top:520.53px" width="5" height="6" viewBox="0 0 5 6"><path d="M0.6 0.3L4.4 3L0.6 5.7Z" fill="#b0b0b0"/></svg>
<svg class="a" style="left:531px;top:520.03px" width="8" height="7" viewBox="0 0 8 7"><path d="M0.3 0.6H3.2L4 1.6H7.7V6.4H0.3Z" fill="#aab1b8"/></svg>
<div class="a tr" style="left:542px;top:517.53px;">00008</div>
<svg class="a" style="left:520px;top:532.725px" width="5" height="6" viewBox="0 0 5 6"><path d="M0.6 0.3L4.4 3L0.6 5.7Z" fill="#b0b0b0"/></svg>
<svg class="a" style="left:531px;top:532.225px" width="8" height="7" viewBox="0 0 8 7"><path d="M0.3 0.6H3.2L4 1.6H7.7V6.4H0.3Z" fill="#aab1b8"/></svg>
<div class="a tr" style="left:542px;top:529.725px;">00009</div>
<svg class="a" style="left:510px;top:542.92px" width="8" height="10" viewBox="0 0 8 10"><path d="M1.5 0.5H5L7 2.5V8.5H1.5Z" fill="#b9c3cc"/><rect x="0.3" y="4.3" width="3.4" height="2.8" fill="#4a88c7"/><rect x="3.2" y="5.8" width="3.6" height="3" fill="#f4c63d"/></svg>
<div class="a tr" style="left:520px;top:541.92px;">main.py</div>
<svg class="a" style="left:510px;top:555.115px" width="8" height="10" viewBox="0 0 8 10"><path d="M1.5 0.5H5L7 2.5V8.5H1.5Z" fill="#b9c3cc"/><rect x="0.3" y="4.3" width="3.4" height="2.8" fill="#7d8b99"/><text x="4" y="9.3" font-size="5.5" font-family="Liberation Sans,sans-serif" fill="#4a88c7" font-weight="bold">?</text></svg>
<div class="a tr" style="left:520px;top:554.115px;">model.ckpt</div>
<svg class="a" style="left:510px;top:567.31px" width="8" height="10" viewBox="0 0 8 10"><path d="M1.5 0.5H5L7 2.5V8.5H1.5Z" fill="#b9c3cc"/><rect x="0.3" y="4.3" width="3.4" height="2.8" fill="#4a88c7"/><rect x="3.2" y="5.8" width="3.6" height="3" fill="#f4c63d"/></svg>
<div class="a tr" style="left:520px;top:566.31px;">Template.py</div>
<svg class="a" style="left:487px;top:581.505px" width="5" height="6" viewBox="0 0 5 6"><path d="M0.6 0.3L4.4 3L0.6 5.7Z" fill="#b0b0b0"/></svg>
<svg class="a" style="left:498px;top:581.005px" width="8" height="7" viewBox="0 0 8 7"><path d="M0.3 0.6H3.2L4 1.6H7.7V6.4H0.3Z" fill="#aab1b8"/></svg>
<div class="a tr" style="left:509px;top:578.505px;">Pytorch</div>
<svg class="a" style="left:475px;top:594.2px" width="6" height="5" viewBox="0 0 6 5"><path d="M0.3 0.8H5.7L3 4.4Z" fill="#a8a8a8"/></svg>
<svg class="a" style="left:487px;top:593.2px" width="9" height="7" viewBox="0 0 9 7"><path d="M0.6 0.3V6.7M2.4 0.3V6.7M4.2 0.3V6.7" stroke="#7a9a68" stroke-width="0.9"/><path d="M5.6 0.8L7.8 6.7" stroke="#9aa4ad" stroke-width="1"/></svg>
<div class="a tr" style="left:497.5px;top:590.7px;">External Libraries</div>
<svg class="a" style="left:487px;top:605.895px" width="5" height="6" viewBox="0 0 5 6"><path d="M0.6 0.3L4.4 3L0.6 5.7Z" fill="#b0b0b0"/></svg>
<svg class="a" style="left:498px;top:604.395px" width="9" height="9" viewBox="0 0 9 9"><path d="M4.4 0.3C2.6 0.3 2.7 1.1 2.7 1.1V2.3H4.5V2.7H1.4S0.2 2.6 0.2 4.5S1.3 6.3 1.3 6.3H2.2V5.2S2.2 4.2 3.3 4.2H5.2S6.2 4.2 6.2 3.2V1.4S6.4 0.3 4.4 0.3Z" fill="#3d7dbb"/><path d="M4.6 8.7C6.4 8.7 6.3 7.9 6.3 7.9V6.7H4.5V6.3H7.6S8.8 6.4 8.8 4.5S7.7 2.7 7.7 2.7H6.8V3.8S6.8 4.8 5.7 4.8H3.8S2.8 4.8 2.8 5.8V7.6S2.6 8.7 4.6 8.7Z" fill="#f5c535"/></svg>
<div class="a tr" style="left:509.5px;top:602.895px;">&lt; Python 3.7 (4) &gt; <span style="color:#a6a6a6;margin-left:2px">C:\Program Files\Python37\python.exe</span></div>
<svg class="a" style="left:476px;top:618.09px" width="5" height="6" viewBox="0 0 5 6"><path d="M0.6 0.3L4.4 3L0.6 5.7Z" fill="#b0b0b0"/></svg>
<svg class="a" style="left:487px;top:616.09px" width="10" height="10" viewBox="0 0 10 10"><path d="M0.5 0.5H5.5V2.5M0.5 0.5V6.5H3" fill="none" stroke="#8a96a1" stroke-width="0.9"/><path d="M1.5 2H4M1.5 3.5H3" stroke="#8a96a1" stroke-width="0.7"/><circle cx="6.3" cy="6.3" r="3.3" fill="#3a9ad9"/><path d="M6.3 4.3V6.5H7.8" fill="none" stroke="#fff" stroke-width="0.8"/></svg>
<div class="a tr" style="left:497.5px;top:615.09px;">Scratches and Consoles</div>
<div class="a" style="left:785px;top:329px;width:434px;height:16px;background:#f2f2f2;"></div>
<div class="a" style="left:785px;top:344.5px;width:434px;height:1px;background:#d1d1d1;"></div>
<svg class="a" style="left:791px;top:332px" width="8" height="10" viewBox="0 0 8 10"><path d="M1.5 0.5H5L7 2.5V8.5H1.5Z" fill="#b9c3cc"/><rect x="0.3" y="4.3" width="3.4" height="2.8" fill="#4a88c7"/><rect x="3.2" y="5.8" width="3.6" height="3" fill="#f4c63d"/></svg>
<div class="a ui" style="left:801px;top:332px;font-size:7.2px;color:#333">main.py</div>
<svg class="a" style="left:831px;top:334.5px" width="5" height="5" viewBox="0 0 5 5"><path d="M0.8 0.8L4.2 4.2M4.2 0.8L0.8 4.2" stroke="#c8c8c8" stroke-width="0.7"/></svg>
<div class="a" style="left:841px;top:329px;width:72px;height:16px;background:#fff;"></div>
<div class="a" style="left:841px;top:343.2px;width:72px;height:1.7px;background:#3f72a8;"></div>
<svg class="a" style="left:848px;top:332px" width="8" height="10" viewBox="0 0 8 10"><path d="M1.5 0.5H5L7 2.5V8.5H1.5Z" fill="#b9c3cc"/><rect x="0.3" y="4.3" width="3.4" height="2.8" fill="#4a88c7"/><rect x="3.2" y="5.8" width="3.6" height="3" fill="#f4c63d"/></svg>
<div class="a ui" style="left:858px;top:332px;font-size:7.2px;color:#222">Template.py</div>
<svg class="a" style="left:902px;top:334.5px" width="5" height="5" viewBox="0 0 5 5"><path d="M0.8 0.8L4.2 4.2M4.2 0.8L0.8 4.2" stroke="#b0b0b0" stroke-width="0.7"/></svg>
<div class="a" style="left:785px;top:346px;width:434px;height:410px;background:#fff;overflow:hidden">
<div class="a" style="left:0;top:0;width:47px;height:410px;background:#f0f0f0"></div>
<div class="a" style="left:47px;top:0;width:1px;height:410px;background:#e4e4e4"></div>
<div class="a" style="left:0;top:226px;width:425px;height:16.5px;background:#fcfaed"></div>
<div class="a" style="left:49px;top:226px;width:376px;height:16.5px;background:#fffae3"></div>
<div class="a mono ln" style="left:3.6px;top:-3.15px">143</div>
<div class="a mono ln" style="left:3.6px;top:13.34px">144</div>
<div class="a mono pc" style="left:52px;top:13.34px">accuracy_list, f1_score_list = c.get_f1_score()</div>
<div class="a mono ln" style="left:3.6px;top:29.83px">145</div>
<div class="a mono pc" style="left:52px;top:29.83px"><span class="kw">print</span>(<span class="st">"<span style="font-family:'Noto Serif CJK SC',serif;font-weight:normal;font-size:10.6px;color:#2a8a74;line-height:0">十个分类的</span>Accuracy<span style="font-family:'Noto Serif CJK SC',serif;font-weight:normal;font-size:10.4px;color:#2a8a74;line-height:0;padding-right:2px">：</span>"</span>)</div>
<div class="a mono ln" style="left:3.6px;top:46.32px">146</div>
<div class="a mono pc" style="left:52px;top:46.32px"><span class="kw">print</span>(accuracy_list)</div>
<div class="a mono ln" style="left:3.6px;top:62.81px">147</div>
<div class="a mono pc" style="left:52px;top:62.81px"><span class="kw">print</span>(<span class="st">"<span style="font-family:'Noto Serif CJK SC',serif;font-weight:normal;font-size:10.6px;color:#2a8a74;line-height:0">十个分类的</span>f1_score<span style="font-family:'Noto Serif CJK SC',serif;font-weight:normal;font-size:10.4px;color:#2a8a74;line-height:0;padding-right:2px">：</span>"</span>)</div>
<div class="a mono ln" style="left:3.6px;top:79.3px">148</div>
<div class="a mono pc" style="left:52px;top:79.3px"><span class="kw">print</span>(f1_score_list)</div>
<div class="a mono ln" style="left:3.6px;top:95.79px">149</div>
<div class="a mono ln" style="left:3.6px;top:112.28px">150</div>
<div class="a mono pc" style="left:52px;top:112.28px"><span class="st">"""</span></div>
<div class="a mono ln" style="left:3.6px;top:128.77px">151</div>
<div class="a mono pc" style="left:52px;top:128.77px"><span class="st">Visual</span></div>
<div class="a mono ln" style="left:3.6px;top:145.26px">152</div>
<div class="a mono pc" style="left:52px;top:145.26px"><span class="st">"""</span></div>
<div class="a mono ln" style="left:3.6px;top:161.75px">153</div>
<div class="a mono pc" style="left:52px;top:161.75px">model.eval()</div>
<div class="a mono ln" style="left:3.6px;top:178.24px">154</div>
<div class="a mono pc" style="left:52px;top:178.24px"><span class="kw">with</span> torch.no_grad():</div>
<div class="a mono ln" style="left:3.6px;top:194.73px">155</div>
<div class="a mono pc" style="left:52px;top:194.73px">    correct = <span class="nu">0</span></div>
<div class="a mono ln" style="left:3.6px;top:211.22px">156</div>
<div class="a mono pc" style="left:52px;top:211.22px">    total = <span class="nu">0</span></div>
<div class="a mono ln" style="left:3.6px;top:227.71px">157</div>
<div class="a mono pc" style="left:52px;top:227.71px">    image, label = test_dataset<span style="background:#9fe0d3">[</span><span class="nu">500</span><span style="background:#9fe0d3;box-shadow:inset 1.2px 0 0 #000">]</span></div>
<div class="a mono ln" style="left:3.6px;top:244.2px">158</div>
<div class="a mono pc" style="left:52px;top:244.2px">    image = image.to(device).reshape(<span class="nu">1</span>, <span class="nu">1</span>, <span class="nu">28</span>, <span class="nu">28</span>)</div>
<div class="a mono ln" style="left:3.6px;top:260.69px">159</div>
<div class="a mono pc" style="left:52px;top:260.69px">    outputs = model(image)</div>
<div class="a mono ln" style="left:3.6px;top:277.18px">160</div>
<div class="a mono pc" style="left:52px;top:277.18px">    image = image.numpy().reshape(<span class="nu">28</span>, <span class="nu">28</span>)</div>
<div class="a mono ln" style="left:3.6px;top:293.67px">161</div>
<div class="a mono pc" style="left:52px;top:293.67px">    plt.imshow(image)</div>
<div class="a mono ln" style="left:3.6px;top:310.16px">162</div>
<div class="a mono pc" style="left:52px;top:310.16px">    plt.show()</div>
<div class="a mono ln" style="left:3.6px;top:326.65px">163</div>
<div class="a mono pc" style="left:52px;top:326.65px">    <span class="kw">print</span>(label_chinese_character_mapping[<span class="kw">int</span>(label)])</div>
<div class="a mono ln" style="left:3.6px;top:343.14px">164</div>
<div class="a mono ln" style="left:3.6px;top:359.63px">165</div>
<div class="a mono pc" style="left:52px;top:359.63px"><span class="cm"># Save the model checkpoint</span></div>
<div class="a mono ln" style="left:3.6px;top:376.12px">166</div>
<div class="a mono pc" style="left:52px;top:376.12px">torch.save(model.state_dict(), <span class="st">'model.ckpt'</span>)</div>
<div class="a mono ln" style="left:3.6px;top:392.61px">167</div>
<svg class="a" style="left:43.5px;top:117.03px" width="7" height="7" viewBox="0 0 7 7"><rect x="0.6" y="0.6" width="5.8" height="5.8" rx="1.2" fill="#fff" stroke="#dedede" stroke-width="0.6"/><path d="M2 3.5H5" stroke="#d4d4d4" stroke-width="0.6"/></svg>
<svg class="a" style="left:43.5px;top:150.01px" width="7" height="7" viewBox="0 0 7 7"><rect x="0.6" y="0.6" width="5.8" height="5.8" rx="1.2" fill="#fff" stroke="#dedede" stroke-width="0.6"/><path d="M2 3.5H5" stroke="#d4d4d4" stroke-width="0.6"/></svg>
<svg class="a" style="left:43.5px;top:182.99px" width="7" height="7" viewBox="0 0 7 7"><rect x="0.6" y="0.6" width="5.8" height="5.8" rx="1.2" fill="#fff" stroke="#dedede" stroke-width="0.6"/><path d="M2 3.5H5" stroke="#d4d4d4" stroke-width="0.6"/></svg>
<svg class="a" style="left:43.5px;top:331.4px" width="7" height="7" viewBox="0 0 7 7"><rect x="0.6" y="0.6" width="5.8" height="5.8" rx="1.2" fill="#fff" stroke="#dedede" stroke-width="0.6"/><path d="M2 3.5H5" stroke="#d4d4d4" stroke-width="0.6"/></svg>
<div class="a" style="left:425px;top:0;width:9px;height:410px;background:#fff;border-left:1px solid #ececec"></div>
<div class="a" style="left:427px;top:1px;width:5px;height:5px;background:#e5c400"></div>
<div class="a" style="left:427px;top:51.4px;width:7px;height:1.2px;background:#cfcfcf"></div>
<div class="a" style="left:427px;top:69.4px;width:7px;height:1.2px;background:#cfcfcf"></div>
<div class="a" style="left:427px;top:87.4px;width:7px;height:1.2px;background:#e8cf3a"></div>
<div class="a" style="left:427px;top:96.4px;width:7px;height:1.2px;background:#e8cf3a"></div>
<div class="a" style="left:427px;top:112.4px;width:7px;height:1.2px;background:#cfcfcf"></div>
<div class="a" style="left:427px;top:270px;width:7px;height:1px;background:#d8d8d8"></div>
<div class="a" style="left:427px;top:274px;width:7px;height:1px;background:#e8dfa0"></div>
<div class="a" style="left:427px;top:278px;width:7px;height:1px;background:#d8d8d8"></div>
<div class="a" style="left:428px;top:334px;width:6px;height:55px;background:#dcdcdc"></div>
<div class="a" style="left:52px;top:402.5px;width:183px;height:5.5px;background:#dedede"></div>
</div>
<div class="a" style="left:785px;top:756px;width:434px;height:13px;background:#f2f2f2;"></div>
<div class="a" style="left:785px;top:756px;width:434px;height:1px;background:#e2e2e2;"></div>
<div class="a ui" style="left:838px;top:757.5px;font-size:7.2px;color:#555">with torch.no_grad()</div>
<div class="a" style="left:461px;top:769px;width:1134px;height:1px;background:#d1d1d1;"></div>
<div class="a" style="left:1218px;top:329px;width:1px;height:440px;background:#d1d1d1;"></div>
<div class="a" style="left:1219px;top:329px;width:363px;height:16px;background:#f2f2f2;"></div>
<div class="a" style="left:1219px;top:344px;width:363px;height:1px;background:#d1d1d1;"></div>
<div class="a ui" style="left:1222.5px;top:332px;font-size:7.2px;color:#333">SciView:</div>
<div class="a ui" style="left:1260px;top:332px;font-size:7.2px;color:#333">Data</div>
<div class="a ui" style="left:1290px;top:332px;font-size:7.2px;color:#333">Plots</div>
<div class="a" style="left:1283px;top:343px;width:31px;height:1.5px;background:#a3afbd;"></div>
<svg class="a" style="left:1554.3px;top:332px" width="9" height="9" viewBox="0 0 9 9"><g transform="translate(4.5 4.5)"><circle r="2.3" fill="none" stroke="#555" stroke-width="1.5"/><g stroke="#555" stroke-width="1.3"><path d="M0 -4V-2.6M0 4V2.6M-4 0H-2.6M4 0H2.6M-2.83 -2.83L-1.9 -1.9M2.83 2.83L1.9 1.9M-2.83 2.83L-1.9 1.9M2.83 -2.83L1.9 -1.9"/></g></g></svg>
<svg class="a" style="left:1570.5px;top:332px" width="9" height="9" viewBox="0 0 9 9"><path d="M0.8 4.5H8.2" stroke="#555" stroke-width="0.9"/></svg>
<div class="a" style="left:1221px;top:347px;width:14px;height:13px;background:#d6d6d6;"></div>
<svg class="a" style="left:1223.5px;top:349px" width="9" height="9" viewBox="0 0 9 9"><path d="M0.8 0.8L3.4 3.4M8.2 0.8L5.6 3.4M0.8 8.2L3.4 5.6M8.2 8.2L5.6 5.6" stroke="#555" stroke-width="1"/><path d="M0.5 0.5H3V1.3L1.3 3H0.5ZM8.5 0.5H6V1.3L7.7 3H8.5ZM0.5 8.5H3V7.7L1.3 6H0.5ZM8.5 8.5H6V7.7L7.7 6H8.5Z" fill="#555"/></svg>
<svg class="a" style="left:1239.5px;top:349px" width="9" height="9" viewBox="0 0 9 9"><rect x="0.6" y="1" width="7.8" height="7" fill="none" stroke="#6e6e6e" stroke-width="0.9"/><path d="M3.2 1V8M5.8 1V8" stroke="#6e6e6e" stroke-width="0.9"/></svg>
<div class="a" style="left:1253px;top:348px;width:1px;height:11px;background:#dcdcdc;"></div>
<svg class="a" style="left:1259px;top:348.5px" width="10" height="10" viewBox="0 0 10 10"><circle cx="5" cy="5" r="3.9" fill="none" stroke="#6e6e6e" stroke-width="0.9"/><path d="M2.2 5H7.8M5 2.2V7.8" stroke="#6e6e6e" stroke-width="0.9"/></svg>
<svg class="a" style="left:1275px;top:348.5px" width="10" height="10" viewBox="0 0 10 10"><circle cx="5" cy="5" r="3.9" fill="none" stroke="#6e6e6e" stroke-width="0.9"/><path d="M2.2 5H7.8" stroke="#6e6e6e" stroke-width="0.9"/></svg>
<div class="a ui" style="left:1291.5px;top:349px;font-size:6.6px;font-weight:bold;color:#555;letter-spacing:-0.2px">1:1</div>
<svg class="a" style="left:1307px;top:350px" width="10" height="8" viewBox="0 0 10 8"><rect x="0.6" y="0.6" width="8.8" height="6.8" fill="#e9e9e9" stroke="#cfcfcf" stroke-width="0.8"/></svg>
<svg class="a" style="left:1323px;top:348.5px" width="10" height="10" viewBox="0 0 10 10"><path d="M1.2 8.8L1.6 6.8L5.8 2.6L7.4 4.2L3.2 8.4Z" fill="none" stroke="#555" stroke-width="0.9"/><path d="M5.6 1.8L6.6 0.8A1.2 1.2 0 0 1 8.4 0.8L9.2 1.6A1.2 1.2 0 0 1 9.2 3.4L8.2 4.4Z" fill="#555"/></svg>
<div class="a ui" style="left:1406px;top:349px;font-size:7.25px;color:#333">640x480 PNG (24-bit color) 19.4 kB</div>
<div class="a" style="left:1533px;top:353px;width:39.5px;height:31px;background:#fdfdfd;"></div>
<div class="a" style="left:1540px;top:355.6px;width:26.4px;height:26.6px;background:#fde725;"></div>
<svg class="a" style="left:1540px;top:355.6px" width="26.4" height="26.6" viewBox="0 0 26.4 26.6"><path d="M1 4.5C8 3.5 18 2 25 1" stroke="#2f6b8e" stroke-width="2.2" fill="none"/><path d="M13.5 3C10 9 5 16 1.5 22.5" stroke="#2a788e" stroke-width="2.4" fill="none"/><path d="M10.5 13C9.8 17 9.5 20 9.2 23.5" stroke="#3b528b" stroke-width="2.2" fill="none"/><path d="M12 13.5C14.5 17 16 20.5 17.5 24" stroke="#2f6b8e" stroke-width="2.2" fill="none"/></svg>
<svg class="a" style="left:1572px;top:366px" width="4" height="6" viewBox="0 0 4 6"><path d="M3.5 0.5L0.8 3L3.5 5.5" fill="none" stroke="#d8d8d8" stroke-width="0.7"/></svg>
<div class="a" style="left:1219px;top:452px;width:303px;height:226px;background:#fff;border:1px solid #e3e3e3"></div>
<div class="a" style="left:1270.6px;top:459.5px;width:200px;height:200px;overflow:hidden;background:#fde725"><div style="position:absolute;left:0;top:0;width:200px;height:200px;filter:blur(0.8px)"><svg style="display:block" width="200" height="200" viewBox="0 0 28 28" preserveAspectRatio="none" shape-rendering="crispEdges"><rect x="0" y="0" width="28" height="28" fill="#fde725"/><rect x="20" y="0" width="1.02" height="1.02" fill="#bddf26"/><rect x="21" y="0" width="1.02" height="1.02" fill="#5fc860"/><rect x="22" y="0" width="1.02" height="1.02" fill="#22a884"/><rect x="23" y="0" width="1.02" height="1.02" fill="#22a884"/><rect x="24" y="0" width="1.02" height="1.02" fill="#21918c"/><rect x="25" y="0" width="1.02" height="1.02" fill="#26848d"/><rect x="26" y="0" width="1.02" height="1.02" fill="#21918c"/><rect x="27" y="0" width="1.02" height="1.02" fill="#7ad151"/><rect x="12" y="1" width="1.02" height="1.02" fill="#44bf70"/><rect x="13" y="1" width="1.02" height="1.02" fill="#bddf26"/><rect x="14" y="1" width="1.02" height="1.02" fill="#5fc860"/><rect x="15" y="1" width="1.02" height="1.02" fill="#5fc860"/><rect x="16" y="1" width="1.02" height="1.02" fill="#22a884"/><rect x="17" y="1" width="1.02" height="1.02" fill="#229c88"/><rect x="18" y="1" width="1.02" height="1.02" fill="#21918c"/><rect x="19" y="1" width="1.02" height="1.02" fill="#21918c"/><rect x="20" y="1" width="1.02" height="1.02" fill="#26848d"/><rect x="21" y="1" width="1.02" height="1.02" fill="#2a788e"/><rect x="22" y="1" width="1.02" height="1.02" fill="#306b8e"/><rect x="23" y="1" width="1.02" height="1.02" fill="#355f8d"/><rect x="24" y="1" width="1.02" height="1.02" fill="#355f8d"/><rect x="25" y="1" width="1.02" height="1.02" fill="#3b528a"/><rect x="26" y="1" width="1.02" height="1.02" fill="#355f8d"/><rect x="27" y="1" width="1.02" height="1.02" fill="#33b47a"/><rect x="5" y="2" width="1.02" height="1.02" fill="#bddf26"/><rect x="6" y="2" width="1.02" height="1.02" fill="#7ad151"/><rect x="7" y="2" width="1.02" height="1.02" fill="#44bf70"/><rect x="8" y="2" width="1.02" height="1.02" fill="#21918c"/><rect x="9" y="2" width="1.02" height="1.02" fill="#44bf70"/><rect x="10" y="2" width="1.02" height="1.02" fill="#2a788e"/><rect x="11" y="2" width="1.02" height="1.02" fill="#21918c"/><rect x="12" y="2" width="1.02" height="1.02" fill="#2a788e"/><rect x="13" y="2" width="1.02" height="1.02" fill="#21918c"/><rect x="14" y="2" width="1.02" height="1.02" fill="#306b8e"/><rect x="15" y="2" width="1.02" height="1.02" fill="#306b8e"/><rect x="16" y="2" width="1.02" height="1.02" fill="#355f8d"/><rect x="17" y="2" width="1.02" height="1.02" fill="#306b8e"/><rect x="18" y="2" width="1.02" height="1.02" fill="#414487"/><rect x="19" y="2" width="1.02" height="1.02" fill="#306b8e"/><rect x="20" y="2" width="1.02" height="1.02" fill="#306b8e"/><rect x="21" y="2" width="1.02" height="1.02" fill="#21918c"/><rect x="22" y="2" width="1.02" height="1.02" fill="#22a884"/><rect x="23" y="2" width="1.02" height="1.02" fill="#22a884"/><rect x="24" y="2" width="1.02" height="1.02" fill="#5fc860"/><rect x="25" y="2" width="1.02" height="1.02" fill="#33b47a"/><rect x="26" y="2" width="1.02" height="1.02" fill="#33b47a"/><rect x="1" y="3" width="1.02" height="1.02" fill="#44bf70"/><rect x="2" y="3" width="1.02" height="1.02" fill="#26848d"/><rect x="3" y="3" width="1.02" height="1.02" fill="#2a788e"/><rect x="4" y="3" width="1.02" height="1.02" fill="#2a788e"/><rect x="5" y="3" width="1.02" height="1.02" fill="#2a788e"/><rect x="6" y="3" width="1.02" height="1.02" fill="#355f8d"/><rect x="7" y="3" width="1.02" height="1.02" fill="#355f8d"/><rect x="8" y="3" width="1.02" height="1.02" fill="#355f8d"/><rect x="9" y="3" width="1.02" height="1.02" fill="#3b528a"/><rect x="10" y="3" width="1.02" height="1.02" fill="#3b528a"/><rect x="11" y="3" width="1.02" height="1.02" fill="#306b8e"/><rect x="12" y="3" width="1.02" height="1.02" fill="#355f8d"/><rect x="13" y="3" width="1.02" height="1.02" fill="#2a788e"/><rect x="14" y="3" width="1.02" height="1.02" fill="#3b528a"/><rect x="15" y="3" width="1.02" height="1.02" fill="#21918c"/><rect x="16" y="3" width="1.02" height="1.02" fill="#306b8e"/><rect x="17" y="3" width="1.02" height="1.02" fill="#33b47a"/><rect x="18" y="3" width="1.02" height="1.02" fill="#33b47a"/><rect x="19" y="3" width="1.02" height="1.02" fill="#7ad151"/><rect x="20" y="3" width="1.02" height="1.02" fill="#bddf26"/><rect x="0" y="4" width="1.02" height="1.02" fill="#9cd83c"/><rect x="1" y="4" width="1.02" height="1.02" fill="#44337d"/><rect x="2" y="4" width="1.02" height="1.02" fill="#44337d"/><rect x="3" y="4" width="1.02" height="1.02" fill="#44337d"/><rect x="4" y="4" width="1.02" height="1.02" fill="#482173"/><rect x="5" y="4" width="1.02" height="1.02" fill="#44337d"/><rect x="6" y="4" width="1.02" height="1.02" fill="#414487"/><rect x="7" y="4" width="1.02" height="1.02" fill="#3b528a"/><rect x="8" y="4" width="1.02" height="1.02" fill="#2a788e"/><rect x="9" y="4" width="1.02" height="1.02" fill="#26848d"/><rect x="10" y="4" width="1.02" height="1.02" fill="#21918c"/><rect x="11" y="4" width="1.02" height="1.02" fill="#33b47a"/><rect x="12" y="4" width="1.02" height="1.02" fill="#44bf70"/><rect x="13" y="4" width="1.02" height="1.02" fill="#9cd83c"/><rect x="14" y="4" width="1.02" height="1.02" fill="#5fc860"/><rect x="15" y="4" width="1.02" height="1.02" fill="#21918c"/><rect x="16" y="4" width="1.02" height="1.02" fill="#21918c"/><rect x="0" y="5" width="1.02" height="1.02" fill="#bddf26"/><rect x="1" y="5" width="1.02" height="1.02" fill="#33b47a"/><rect x="2" y="5" width="1.02" height="1.02" fill="#306b8e"/><rect x="3" y="5" width="1.02" height="1.02" fill="#306b8e"/><rect x="4" y="5" width="1.02" height="1.02" fill="#306b8e"/><rect x="5" y="5" width="1.02" height="1.02" fill="#26848d"/><rect x="6" y="5" width="1.02" height="1.02" fill="#355f8d"/><rect x="7" y="5" width="1.02" height="1.02" fill="#44bf70"/><rect x="8" y="5" width="1.02" height="1.02" fill="#dde326"/><rect x="13" y="5" width="1.02" height="1.02" fill="#9cd83c"/><rect x="14" y="5" width="1.02" height="1.02" fill="#2a788e"/><rect x="15" y="5" width="1.02" height="1.02" fill="#21918c"/><rect x="16" y="5" width="1.02" height="1.02" fill="#9cd83c"/><rect x="2" y="6" width="1.02" height="1.02" fill="#9cd83c"/><rect x="3" y="6" width="1.02" height="1.02" fill="#dde326"/><rect x="12" y="6" width="1.02" height="1.02" fill="#5fc860"/><rect x="13" y="6" width="1.02" height="1.02" fill="#21918c"/><rect x="14" y="6" width="1.02" height="1.02" fill="#21918c"/><rect x="15" y="6" width="1.02" height="1.02" fill="#dde326"/><rect x="11" y="7" width="1.02" height="1.02" fill="#44bf70"/><rect x="12" y="7" width="1.02" height="1.02" fill="#355f8d"/><rect x="13" y="7" width="1.02" height="1.02" fill="#26848d"/><rect x="14" y="7" width="1.02" height="1.02" fill="#5fc860"/><rect x="10" y="8" width="1.02" height="1.02" fill="#44bf70"/><rect x="11" y="8" width="1.02" height="1.02" fill="#306b8e"/><rect x="12" y="8" width="1.02" height="1.02" fill="#306b8e"/><rect x="13" y="8" width="1.02" height="1.02" fill="#44bf70"/><rect x="14" y="8" width="1.02" height="1.02" fill="#eae525"/><rect x="9" y="9" width="1.02" height="1.02" fill="#9cd83c"/><rect x="10" y="9" width="1.02" height="1.02" fill="#355f8d"/><rect x="11" y="9" width="1.02" height="1.02" fill="#306b8e"/><rect x="12" y="9" width="1.02" height="1.02" fill="#306b8e"/><rect x="8" y="10" width="1.02" height="1.02" fill="#7ad151"/><rect x="9" y="10" width="1.02" height="1.02" fill="#2a788e"/><rect x="10" y="10" width="1.02" height="1.02" fill="#306b8e"/><rect x="11" y="10" width="1.02" height="1.02" fill="#22a884"/><rect x="12" y="10" width="1.02" height="1.02" fill="#dde326"/><rect x="7" y="11" width="1.02" height="1.02" fill="#dde326"/><rect x="8" y="11" width="1.02" height="1.02" fill="#2a788e"/><rect x="9" y="11" width="1.02" height="1.02" fill="#2a788e"/><rect x="10" y="11" width="1.02" height="1.02" fill="#26848d"/><rect x="11" y="11" width="1.02" height="1.02" fill="#bddf26"/><rect x="6" y="12" width="1.02" height="1.02" fill="#7ad151"/><rect x="7" y="12" width="1.02" height="1.02" fill="#229c88"/><rect x="8" y="12" width="1.02" height="1.02" fill="#306b8e"/><rect x="9" y="12" width="1.02" height="1.02" fill="#21918c"/><rect x="10" y="12" width="1.02" height="1.02" fill="#bddf26"/><rect x="5" y="13" width="1.02" height="1.02" fill="#dde326"/><rect x="6" y="13" width="1.02" height="1.02" fill="#2a788e"/><rect x="7" y="13" width="1.02" height="1.02" fill="#2a788e"/><rect x="8" y="13" width="1.02" height="1.02" fill="#2a788e"/><rect x="9" y="13" width="1.02" height="1.02" fill="#9cd83c"/><rect x="5" y="14" width="1.02" height="1.02" fill="#44bf70"/><rect x="6" y="14" width="1.02" height="1.02" fill="#355f8d"/><rect x="7" y="14" width="1.02" height="1.02" fill="#2a788e"/><rect x="8" y="14" width="1.02" height="1.02" fill="#22a884"/><rect x="12" y="14" width="1.02" height="1.02" fill="#bddf26"/><rect x="13" y="14" width="1.02" height="1.02" fill="#bddf26"/><rect x="4" y="15" width="1.02" height="1.02" fill="#44bf70"/><rect x="5" y="15" width="1.02" height="1.02" fill="#2a788e"/><rect x="6" y="15" width="1.02" height="1.02" fill="#3b528a"/><rect x="7" y="15" width="1.02" height="1.02" fill="#33b47a"/><rect x="11" y="15" width="1.02" height="1.02" fill="#22a884"/><rect x="12" y="15" width="1.02" height="1.02" fill="#433981"/><rect x="13" y="15" width="1.02" height="1.02" fill="#355f8d"/><rect x="14" y="15" width="1.02" height="1.02" fill="#229c88"/><rect x="3" y="16" width="1.02" height="1.02" fill="#7ad151"/><rect x="4" y="16" width="1.02" height="1.02" fill="#306b8e"/><rect x="5" y="16" width="1.02" height="1.02" fill="#306b8e"/><rect x="6" y="16" width="1.02" height="1.02" fill="#26848d"/><rect x="7" y="16" width="1.02" height="1.02" fill="#dde326"/><rect x="10" y="16" width="1.02" height="1.02" fill="#44bf70"/><rect x="11" y="16" width="1.02" height="1.02" fill="#5fc860"/><rect x="12" y="16" width="1.02" height="1.02" fill="#462c79"/><rect x="13" y="16" width="1.02" height="1.02" fill="#3b528a"/><rect x="14" y="16" width="1.02" height="1.02" fill="#229c88"/><rect x="15" y="16" width="1.02" height="1.02" fill="#dde326"/><rect x="16" y="16" width="1.02" height="1.02" fill="#229c88"/><rect x="3" y="17" width="1.02" height="1.02" fill="#5fc860"/><rect x="4" y="17" width="1.02" height="1.02" fill="#355f8d"/><rect x="5" y="17" width="1.02" height="1.02" fill="#306b8e"/><rect x="6" y="17" width="1.02" height="1.02" fill="#229c88"/><rect x="9" y="17" width="1.02" height="1.02" fill="#7ad151"/><rect x="10" y="17" width="1.02" height="1.02" fill="#44bf70"/><rect x="11" y="17" width="1.02" height="1.02" fill="#5fc860"/><rect x="12" y="17" width="1.02" height="1.02" fill="#462c79"/><rect x="13" y="17" width="1.02" height="1.02" fill="#3b528a"/><rect x="14" y="17" width="1.02" height="1.02" fill="#21918c"/><rect x="15" y="17" width="1.02" height="1.02" fill="#21918c"/><rect x="16" y="17" width="1.02" height="1.02" fill="#3f4988"/><rect x="17" y="17" width="1.02" height="1.02" fill="#21918c"/><rect x="18" y="17" width="1.02" height="1.02" fill="#bddf26"/><rect x="2" y="18" width="1.02" height="1.02" fill="#21918c"/><rect x="3" y="18" width="1.02" height="1.02" fill="#306b8e"/><rect x="4" y="18" width="1.02" height="1.02" fill="#3b528a"/><rect x="5" y="18" width="1.02" height="1.02" fill="#22a884"/><rect x="6" y="18" width="1.02" height="1.02" fill="#44bf70"/><rect x="11" y="18" width="1.02" height="1.02" fill="#44bf70"/><rect x="12" y="18" width="1.02" height="1.02" fill="#47176a"/><rect x="13" y="18" width="1.02" height="1.02" fill="#355f8d"/><rect x="14" y="18" width="1.02" height="1.02" fill="#229c88"/><rect x="15" y="18" width="1.02" height="1.02" fill="#21918c"/><rect x="16" y="18" width="1.02" height="1.02" fill="#44337d"/><rect x="17" y="18" width="1.02" height="1.02" fill="#44337d"/><rect x="18" y="18" width="1.02" height="1.02" fill="#229c88"/><rect x="1" y="19" width="1.02" height="1.02" fill="#9cd83c"/><rect x="2" y="19" width="1.02" height="1.02" fill="#2a788e"/><rect x="3" y="19" width="1.02" height="1.02" fill="#306b8e"/><rect x="4" y="19" width="1.02" height="1.02" fill="#26848d"/><rect x="11" y="19" width="1.02" height="1.02" fill="#229c88"/><rect x="12" y="19" width="1.02" height="1.02" fill="#44337d"/><rect x="13" y="19" width="1.02" height="1.02" fill="#229c88"/><rect x="14" y="19" width="1.02" height="1.02" fill="#33b47a"/><rect x="15" y="19" width="1.02" height="1.02" fill="#bddf26"/><rect x="16" y="19" width="1.02" height="1.02" fill="#306b8e"/><rect x="17" y="19" width="1.02" height="1.02" fill="#44337d"/><rect x="18" y="19" width="1.02" height="1.02" fill="#2a788e"/><rect x="19" y="19" width="1.02" height="1.02" fill="#bddf26"/><rect x="0" y="20" width="1.02" height="1.02" fill="#dde326"/><rect x="1" y="20" width="1.02" height="1.02" fill="#229c88"/><rect x="2" y="20" width="1.02" height="1.02" fill="#414487"/><rect x="3" y="20" width="1.02" height="1.02" fill="#306b8e"/><rect x="4" y="20" width="1.02" height="1.02" fill="#26848d"/><rect x="5" y="20" width="1.02" height="1.02" fill="#44bf70"/><rect x="6" y="20" width="1.02" height="1.02" fill="#44bf70"/><rect x="10" y="20" width="1.02" height="1.02" fill="#22a884"/><rect x="11" y="20" width="1.02" height="1.02" fill="#355f8d"/><rect x="12" y="20" width="1.02" height="1.02" fill="#433981"/><rect x="13" y="20" width="1.02" height="1.02" fill="#33b47a"/><rect x="14" y="20" width="1.02" height="1.02" fill="#dde326"/><rect x="16" y="20" width="1.02" height="1.02" fill="#26848d"/><rect x="17" y="20" width="1.02" height="1.02" fill="#44337d"/><rect x="18" y="20" width="1.02" height="1.02" fill="#44337d"/><rect x="19" y="20" width="1.02" height="1.02" fill="#22a884"/><rect x="0" y="21" width="1.02" height="1.02" fill="#7ad151"/><rect x="1" y="21" width="1.02" height="1.02" fill="#306b8e"/><rect x="2" y="21" width="1.02" height="1.02" fill="#3b528a"/><rect x="3" y="21" width="1.02" height="1.02" fill="#22a884"/><rect x="4" y="21" width="1.02" height="1.02" fill="#5fc860"/><rect x="5" y="21" width="1.02" height="1.02" fill="#229c88"/><rect x="6" y="21" width="1.02" height="1.02" fill="#229c88"/><rect x="10" y="21" width="1.02" height="1.02" fill="#22a884"/><rect x="11" y="21" width="1.02" height="1.02" fill="#3b528a"/><rect x="12" y="21" width="1.02" height="1.02" fill="#3b528a"/><rect x="13" y="21" width="1.02" height="1.02" fill="#9cd83c"/><rect x="16" y="21" width="1.02" height="1.02" fill="#44bf70"/><rect x="17" y="21" width="1.02" height="1.02" fill="#44337d"/><rect x="18" y="21" width="1.02" height="1.02" fill="#44337d"/><rect x="19" y="21" width="1.02" height="1.02" fill="#33b47a"/><rect x="0" y="22" width="1.02" height="1.02" fill="#355f8d"/><rect x="1" y="22" width="1.02" height="1.02" fill="#3b528a"/><rect x="2" y="22" width="1.02" height="1.02" fill="#355f8d"/><rect x="3" y="22" width="1.02" height="1.02" fill="#22a884"/><rect x="4" y="22" width="1.02" height="1.02" fill="#26848d"/><rect x="5" y="22" width="1.02" height="1.02" fill="#21918c"/><rect x="10" y="22" width="1.02" height="1.02" fill="#306b8e"/><rect x="11" y="22" width="1.02" height="1.02" fill="#433981"/><rect x="12" y="22" width="1.02" height="1.02" fill="#306b8e"/><rect x="13" y="22" width="1.02" height="1.02" fill="#dde326"/><rect x="16" y="22" width="1.02" height="1.02" fill="#44bf70"/><rect x="17" y="22" width="1.02" height="1.02" fill="#44337d"/><rect x="18" y="22" width="1.02" height="1.02" fill="#450b5d"/><rect x="19" y="22" width="1.02" height="1.02" fill="#22a884"/><rect x="0" y="23" width="1.02" height="1.02" fill="#26848d"/><rect x="1" y="23" width="1.02" height="1.02" fill="#414487"/><rect x="2" y="23" width="1.02" height="1.02" fill="#306b8e"/><rect x="3" y="23" width="1.02" height="1.02" fill="#2a788e"/><rect x="4" y="23" width="1.02" height="1.02" fill="#22a884"/><rect x="5" y="23" width="1.02" height="1.02" fill="#9cd83c"/><rect x="9" y="23" width="1.02" height="1.02" fill="#33b47a"/><rect x="10" y="23" width="1.02" height="1.02" fill="#44337d"/><rect x="11" y="23" width="1.02" height="1.02" fill="#44337d"/><rect x="12" y="23" width="1.02" height="1.02" fill="#2a788e"/><rect x="16" y="23" width="1.02" height="1.02" fill="#dde326"/><rect x="17" y="23" width="1.02" height="1.02" fill="#26848d"/><rect x="18" y="23" width="1.02" height="1.02" fill="#355f8d"/><rect x="19" y="23" width="1.02" height="1.02" fill="#22a884"/><rect x="0" y="24" width="1.02" height="1.02" fill="#26848d"/><rect x="1" y="24" width="1.02" height="1.02" fill="#482173"/><rect x="2" y="24" width="1.02" height="1.02" fill="#482173"/><rect x="3" y="24" width="1.02" height="1.02" fill="#306b8e"/><rect x="4" y="24" width="1.02" height="1.02" fill="#33b47a"/><rect x="9" y="24" width="1.02" height="1.02" fill="#229c88"/><rect x="10" y="24" width="1.02" height="1.02" fill="#44337d"/><rect x="11" y="24" width="1.02" height="1.02" fill="#355f8d"/><rect x="12" y="24" width="1.02" height="1.02" fill="#33b47a"/><rect x="17" y="24" width="1.02" height="1.02" fill="#2a788e"/><rect x="18" y="24" width="1.02" height="1.02" fill="#355f8d"/><rect x="19" y="24" width="1.02" height="1.02" fill="#306b8e"/><rect x="20" y="24" width="1.02" height="1.02" fill="#22a884"/><rect x="21" y="24" width="1.02" height="1.02" fill="#7ad151"/><rect x="0" y="25" width="1.02" height="1.02" fill="#7ad151"/><rect x="1" y="25" width="1.02" height="1.02" fill="#2a788e"/><rect x="2" y="25" width="1.02" height="1.02" fill="#2a788e"/><rect x="3" y="25" width="1.02" height="1.02" fill="#7ad151"/><rect x="8" y="25" width="1.02" height="1.02" fill="#dde326"/><rect x="9" y="25" width="1.02" height="1.02" fill="#306b8e"/><rect x="10" y="25" width="1.02" height="1.02" fill="#3b528a"/><rect x="11" y="25" width="1.02" height="1.02" fill="#21918c"/><rect x="12" y="25" width="1.02" height="1.02" fill="#dde326"/><rect x="17" y="25" width="1.02" height="1.02" fill="#9cd83c"/><rect x="18" y="25" width="1.02" height="1.02" fill="#306b8e"/><rect x="19" y="25" width="1.02" height="1.02" fill="#306b8e"/><rect x="20" y="25" width="1.02" height="1.02" fill="#26848d"/><rect x="21" y="25" width="1.02" height="1.02" fill="#7ad151"/><rect x="0" y="26" width="1.02" height="1.02" fill="#dde326"/><rect x="1" y="26" width="1.02" height="1.02" fill="#9cd83c"/><rect x="2" y="26" width="1.02" height="1.02" fill="#9cd83c"/><rect x="3" y="26" width="1.02" height="1.02" fill="#eae525"/><rect x="9" y="26" width="1.02" height="1.02" fill="#44bf70"/><rect x="10" y="26" width="1.02" height="1.02" fill="#229c88"/><rect x="11" y="26" width="1.02" height="1.02" fill="#bddf26"/><rect x="18" y="26" width="1.02" height="1.02" fill="#229c88"/><rect x="19" y="26" width="1.02" height="1.02" fill="#306b8e"/><rect x="20" y="26" width="1.02" height="1.02" fill="#26848d"/><rect x="21" y="26" width="1.02" height="1.02" fill="#7ad151"/><rect x="18" y="27" width="1.02" height="1.02" fill="#dde326"/><rect x="19" y="27" width="1.02" height="1.02" fill="#9cd83c"/><rect x="20" y="27" width="1.02" height="1.02" fill="#229c88"/><rect x="21" y="27" width="1.02" height="1.02" fill="#bddf26"/></svg></div></div>
<div class="a" style="left:1270.3px;top:459.2px;width:200.6px;height:200.6px;border:0.6px solid rgba(70,70,40,0.75)"></div>
<div class="a" style="left:1268.2px;top:462.821px;width:2.4px;height:0.5px;background:#333;"></div>
<div class="a" style="left:1273.92px;top:659.5px;width:0.5px;height:2.4px;background:#333;"></div>
<div class="a" style="left:1246.1px;top:459.071px;width:20px;text-align:right;font-family:'DejaVu Sans',sans-serif;font-size:6.4px;line-height:8px;color:#222">0</div>
<div class="a" style="left:1264.17px;top:662.7px;width:20px;text-align:center;font-family:'DejaVu Sans',sans-serif;font-size:6.4px;line-height:8px;color:#222">0</div>
<div class="a" style="left:1268.2px;top:498.536px;width:2.4px;height:0.5px;background:#333;"></div>
<div class="a" style="left:1309.64px;top:659.5px;width:0.5px;height:2.4px;background:#333;"></div>
<div class="a" style="left:1246.1px;top:494.786px;width:20px;text-align:right;font-family:'DejaVu Sans',sans-serif;font-size:6.4px;line-height:8px;color:#222">5</div>
<div class="a" style="left:1299.89px;top:662.7px;width:20px;text-align:center;font-family:'DejaVu Sans',sans-serif;font-size:6.4px;line-height:8px;color:#222">5</div>
<div class="a" style="left:1268.2px;top:534.25px;width:2.4px;height:0.5px;background:#333;"></div>
<div class="a" style="left:1345.35px;top:659.5px;width:0.5px;height:2.4px;background:#333;"></div>
<div class="a" style="left:1246.1px;top:530.5px;width:20px;text-align:right;font-family:'DejaVu Sans',sans-serif;font-size:6.4px;line-height:8px;color:#222">10</div>
<div class="a" style="left:1335.6px;top:662.7px;width:20px;text-align:center;font-family:'DejaVu Sans',sans-serif;font-size:6.4px;line-height:8px;color:#222">10</div>
<div class="a" style="left:1268.2px;top:569.964px;width:2.4px;height:0.5px;background:#333;"></div>
<div class="a" style="left:1381.06px;top:659.5px;width:0.5px;height:2.4px;background:#333;"></div>
<div class="a" style="left:1246.1px;top:566.214px;width:20px;text-align:right;font-family:'DejaVu Sans',sans-serif;font-size:6.4px;line-height:8px;color:#222">15</div>
<div class="a" style="left:1371.31px;top:662.7px;width:20px;text-align:center;font-family:'DejaVu Sans',sans-serif;font-size:6.4px;line-height:8px;color:#222">15</div>
<div class="a" style="left:1268.2px;top:605.679px;width:2.4px;height:0.5px;background:#333;"></div>
<div class="a" style="left:1416.78px;top:659.5px;width:0.5px;height:2.4px;background:#333;"></div>
<div class="a" style="left:1246.1px;top:601.929px;width:20px;text-align:right;font-family:'DejaVu Sans',sans-serif;font-size:6.4px;line-height:8px;color:#222">20</div>
<div class="a" style="left:1407.03px;top:662.7px;width:20px;text-align:center;font-family:'DejaVu Sans',sans-serif;font-size:6.4px;line-height:8px;color:#222">20</div>
<div class="a" style="left:1268.2px;top:641.393px;width:2.4px;height:0.5px;background:#333;"></div>
<div class="a" style="left:1452.49px;top:659.5px;width:0.5px;height:2.4px;background:#333;"></div>
<div class="a" style="left:1246.1px;top:637.643px;width:20px;text-align:right;font-family:'DejaVu Sans',sans-serif;font-size:6.4px;line-height:8px;color:#222">25</div>
<div class="a" style="left:1442.74px;top:662.7px;width:20px;text-align:center;font-family:'DejaVu Sans',sans-serif;font-size:6.4px;line-height:8px;color:#222">25</div>
<div class="a" style="left:1582px;top:329px;width:1px;height:440px;background:#d1d1d1;"></div>
<div class="a" style="left:1583px;top:329px;width:12px;height:44px;background:#c6c6c6;"></div>
<div class="a ui" style="left:1589px;top:355.5px;width:0;height:0;"><div style="position:absolute;white-space:nowrap;transform:translate(-50%,-50%) rotate(90deg);font-size:6.4px;line-height:9px">SciView</div></div>
<svg class="a" style="left:1586px;top:334px" width="6" height="6" viewBox="0 0 6 6"><rect x="0.4" y="0.4" width="5.2" height="5.2" fill="none" stroke="#666" stroke-width="0.7"/><path d="M0.4 2.2H5.6M0.4 3.9H5.6M2.2 0.4V5.6" stroke="#666" stroke-width="0.6"/></svg>
<div class="a ui" style="left:1589px;top:403px;width:0;height:0;"><div style="position:absolute;white-space:nowrap;transform:translate(-50%,-50%) rotate(90deg);font-size:6.4px;line-height:9px">Database</div></div>
<svg class="a" style="left:1585.5px;top:380px" width="6" height="6" viewBox="0 0 6 6"><path d="M0.6 0.5V5.5M2.4 0.5V5.5M4.4 0.7L5.4 5.5" stroke="#666" stroke-width="0.9"/></svg>
<div class="a" style="left:475px;top:770px;width:1107px;height:15px;background:#f2f2f2;"></div>
<div class="a" style="left:475px;top:785px;width:1107px;height:1px;background:#d1d1d1;"></div>
<div class="a ui" style="left:478px;top:772.5px;font-size:7.2px;color:#333">Run:</div>
<svg class="a" style="left:504px;top:773px" width="10" height="10" viewBox="0 0 10 10"><circle cx="5" cy="5" r="3.6" fill="#fbf0b0" opacity=".9"/><circle cx="4.2" cy="3.8" r="2.2" fill="#dbe6f1"/></svg>
<div class="a ui" style="left:516px;top:772.5px;font-size:7.2px;color:#333">Template</div>
<svg class="a" style="left:551px;top:775.3px" width="5" height="5" viewBox="0 0 5 5"><path d="M0.8 0.8L4.2 4.2M4.2 0.8L0.8 4.2" stroke="#c8c8c8" stroke-width="0.7"/></svg>
<div class="a" style="left:497px;top:784px;width:66px;height:1.5px;background:#a3afbd;"></div>
<svg class="a" style="left:1553.5px;top:773px" width="9" height="9" viewBox="0 0 9 9"><g transform="translate(4.5 4.5)"><circle r="2.3" fill="none" stroke="#555" stroke-width="1.5"/><g stroke="#555" stroke-width="1.3"><path d="M0 -4V-2.6M0 4V2.6M-4 0H-2.6M4 0H2.6M-2.83 -2.83L-1.9 -1.9M2.83 2.83L1.9 1.9M-2.83 2.83L-1.9 1.9M2.83 -2.83L1.9 -1.9"/></g></g></svg>
<svg class="a" style="left:1570px;top:773.5px" width="9" height="9" viewBox="0 0 9 9"><path d="M0.8 4.5H8.2" stroke="#555" stroke-width="0.9"/></svg>
<div class="a" style="left:475px;top:786px;width:17px;height:128px;background:#f2f2f2;"></div>
<div class="a" style="left:492px;top:786px;width:1px;height:128px;background:#dcdcdc;"></div>
<div class="a" style="left:493px;top:786px;width:17px;height:128px;background:#f2f2f2;"></div>
<div class="a" style="left:510px;top:786px;width:1px;height:128px;background:#dcdcdc;"></div>
<svg class="a" style="left:478px;top:790.5px" width="9" height="9" viewBox="0 0 9 9"><path d="M1.5 0.8L8 4.5L1.5 8.2Z" fill="#4b9e5f"/></svg>
<svg class="a" style="left:478px;top:806.5px" width="9" height="9" viewBox="0 0 9 9"><rect x="1.8" y="1.8" width="5.4" height="5.4" fill="#c9c9c9"/></svg>
<div class="a" style="left:477px;top:820px;width:13px;height:1px;background:#dcdcdc;"></div>
<svg class="a" style="left:478px;top:825.5px" width="9" height="9" viewBox="0 0 9 9"><rect x="0.8" y="1.5" width="7.4" height="6" fill="#555"/><path d="M0.8 4.2H8.2M4.5 4.2V7.5" stroke="#f2f2f2" stroke-width="0.8"/></svg>
<div class="a" style="left:477px;top:839px;width:13px;height:1px;background:#dcdcdc;"></div>
<svg class="a" style="left:478px;top:845.5px" width="9" height="9" viewBox="0 0 9 9"><path d="M5 0.8L8.2 4L6.6 4.4L5.2 5.8L5 7.6L1.4 4L3.2 3.8L4.6 2.4Z" fill="#555"/><path d="M3.2 5.8L0.8 8.2" stroke="#555" stroke-width="0.9"/></svg>
<svg class="a" style="left:496px;top:790.5px" width="9" height="9" viewBox="0 0 9 9"><path d="M4.5 8V1.2M1.8 3.8L4.5 1.1L7.2 3.8" fill="none" stroke="#b8b8b8" stroke-width="0.9"/></svg>
<svg class="a" style="left:496px;top:806.5px" width="9" height="9" viewBox="0 0 9 9"><path d="M4.5 1V7.8M1.8 5.2L4.5 7.9L7.2 5.2" fill="none" stroke="#b8b8b8" stroke-width="0.9"/></svg>
<svg class="a" style="left:496px;top:822px" width="9" height="9" viewBox="0 0 9 9"><path d="M0.8 1.5H8.2M0.8 4.5H6.5A1.4 1.4 0 0 1 6.5 7.3H4.5M0.8 7.3H2.8" fill="none" stroke="#6e6e6e" stroke-width="0.9"/><path d="M5.3 6L4 7.3L5.3 8.6" fill="none" stroke="#6e6e6e" stroke-width="0.8"/></svg>
<div class="a" style="left:494px;top:835.5px;width:13px;height:13px;background:#d6d6d6;"></div>
<svg class="a" style="left:496px;top:837.5px" width="9" height="9" viewBox="0 0 9 9"><path d="M0.8 1.5H5M0.8 4H5M0.8 7.8H8.2" stroke="#555" stroke-width="0.9"/><path d="M6.8 0.8V5.6M5.2 4.2L6.8 5.8L8.4 4.2" fill="none" stroke="#555" stroke-width="0.9"/></svg>
<svg class="a" style="left:496px;top:854px" width="9" height="9" viewBox="0 0 9 9"><rect x="0.8" y="3" width="7.4" height="3.4" fill="#555"/><rect x="2.3" y="0.8" width="4.4" height="2" fill="#555"/><rect x="2.3" y="5.4" width="4.4" height="3" fill="#555" stroke="#f2f2f2" stroke-width="0.5"/></svg>
<svg class="a" style="left:496px;top:869.5px" width="9" height="9" viewBox="0 0 9 9"><path d="M1 2H8M3.3 2V0.9H5.7V2" fill="none" stroke="#555" stroke-width="1"/><path d="M1.8 2.8H7.2V8.4H1.8Z" fill="#555"/></svg>
<div class="a" style="left:511px;top:786px;width:1071px;height:127px;background:#fff;overflow:hidden">
<div class="a mono pc" style="left:7px;top:4.75px;">[1.0, 0.9833333333333333, 0.9649122807017544, 1.0, 0.9365079365079365, 0.8805970149253731, 0.9333333333333333, 0.9473684210526315, 0.9193548387096774, 0.9661016949152542]</div>
<div class="a mono pc" style="left:7px;top:21.25px;"><span style="font-family:'Noto Serif CJK SC',serif;font-size:10.4px;color:#333;line-height:0">十个分类的</span>f1_score<span style="font-family:'Noto Serif CJK SC',serif;font-size:10.4px;line-height:0">：</span></div>
<div class="a mono pc" style="left:7px;top:37.75px;">[0.17905918057663125, 0.17905918057663125, 0.1687116564417178, 0.17404580152671756, 0.17933130699088146, 0.17905918057663125, 0.17151607963246557, 0.1664098613251156, 0.17404580152671756]</div>
<div class="a mono pc" style="left:7px;top:54.25px;"><span style="font-family:'Noto Serif CJK SC',serif;font-size:10.4px;color:#333;line-height:0">不</span></div>
<div class="a mono pc" style="left:7px;top:87.25px;color:#1c1c8c">Process finished with exit code 0</div>
<div class="a" style="left:7px;top:121px;width:884px;height:6px;background:#d9d9d9"></div>
<div class="a" style="left:1066px;top:34px;width:5px;height:87px;background:#dcdcdc"></div>
</div>
<div class="a" style="left:1581px;top:786px;width:1px;height:128px;background:#d1d1d1;"></div>
<div class="a" style="left:461px;top:913px;width:1134px;height:14px;background:#f2f2f2;"></div>
<div class="a" style="left:461px;top:913px;width:1134px;height:1px;background:#d1d1d1;"></div>
<svg class="a" style="left:481px;top:917.3px" width="7" height="7" viewBox="0 0 7 7"><path d="M0.3 1H6.7M0.3 3.5H6.7M0.3 6H6.7" stroke="#555" stroke-width="0.8"/></svg>
<div class="a ui" style="left:490px;top:915.8px;font-size:6.7px;color:#333"><u>6</u>: TODO</div>
<div class="a" style="left:522px;top:914px;width:41px;height:13px;background:#c9c9c9;"></div>
<svg class="a" style="left:527.5px;top:917.3px" width="6" height="7" viewBox="0 0 6 7"><path d="M0.8 0.6L5.4 3.5L0.8 6.4Z" fill="#555"/></svg>
<div class="a ui" style="left:537px;top:915.8px;font-size:6.7px;color:#333"><u>4</u>: Run</div>
<svg class="a" style="left:570px;top:916.8px" width="8" height="8" viewBox="0 0 8 8"><path d="M3.9 0.4C2.4 0.4 2.5 1.1 2.5 1.1V2.1H4V2.4H1.3S0.3 2.3 0.3 4S1.2 5.6 1.2 5.6H2V4.6S2 3.7 2.9 3.7H4.6S5.4 3.7 5.4 2.9V1.3S5.6 0.4 3.9 0.4Z" fill="#555"/><path d="M4.1 7.6C5.6 7.6 5.5 6.9 5.5 6.9V5.9H4V5.6H6.7S7.7 5.7 7.7 4S6.8 2.4 6.8 2.4H6V3.4S6 4.3 5.1 4.3H3.4S2.6 4.3 2.6 5.1V6.7S2.4 7.6 4.1 7.6Z" fill="#555"/></svg>
<div class="a ui" style="left:580.5px;top:915.8px;font-size:6.7px;color:#333">Python Console</div>
<svg class="a" style="left:640px;top:917.3px" width="8" height="7" viewBox="0 0 8 7"><rect x="0.5" y="0.5" width="7" height="6" fill="#555"/><path d="M1.8 2.2L3.2 3.5L1.8 4.8M4 5H6" fill="none" stroke="#f2f2f2" stroke-width="0.7"/></svg>
<div class="a ui" style="left:650.5px;top:915.8px;font-size:6.7px;color:#333">Terminal</div>
<svg class="a" style="left:1537px;top:916.8px" width="8" height="8" viewBox="0 0 8 8"><circle cx="4" cy="3.8" r="3.1" fill="none" stroke="#555" stroke-width="0.8"/><path d="M1.6 5.8L1 7.6L3 6.8" fill="#555"/></svg>
<div class="a ui" style="left:1547.5px;top:915.8px;font-size:6.7px;color:#333">Event Log</div>
<div class="a" style="left:461px;top:927px;width:1134px;height:1px;background:#e6e6e6;"></div>
<div class="a" style="left:461px;top:928px;width:1134px;height:1px;background:#f4f4f4;"></div>
</body></html>
